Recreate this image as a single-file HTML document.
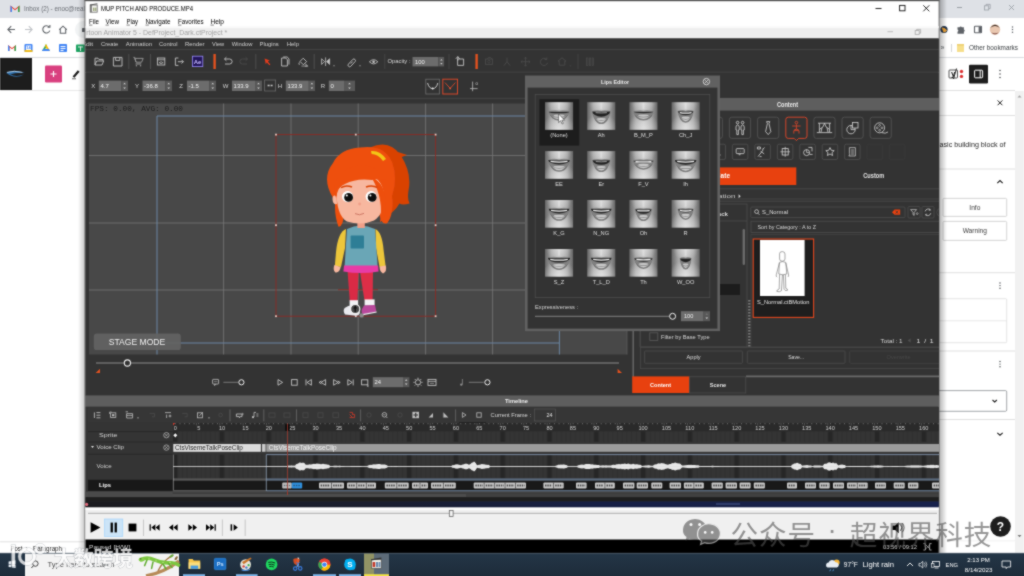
<!DOCTYPE html>
<html lang="en"><head><meta charset="utf-8"><title>MUP PITCH AND PRODUCE.MP4</title>
<style>
html,body{margin:0;padding:0;background:#fff;overflow:hidden}
body{width:1024px;height:576px;font-family:"Liberation Sans","Noto Sans CJK SC",sans-serif}
svg{display:block;position:absolute;left:0;top:0}
text{font-family:"Liberation Sans","Noto Sans CJK SC",sans-serif;white-space:pre}
</style></head><body>
<svg width="1024" height="576" viewBox="0 0 1024 576">
<defs>
<radialGradient id="lipg" cx="50%" cy="45%" r="75%">
<stop offset="0" stop-color="#c9c9c9"/><stop offset="0.55" stop-color="#9a9a9a"/><stop offset="1" stop-color="#4c4c4c"/>
</radialGradient>
<linearGradient id="shL" x1="0" x2="1" y1="0" y2="0"><stop offset="0" stop-color="#000" stop-opacity="0"/><stop offset="1" stop-color="#000" stop-opacity="0.22"/></linearGradient>
<linearGradient id="shR" x1="0" x2="1" y1="0" y2="0"><stop offset="0" stop-color="#000" stop-opacity="0.30"/><stop offset="1" stop-color="#000" stop-opacity="0"/></linearGradient>
<linearGradient id="tbar" x1="0" x2="0" y1="0" y2="1"><stop offset="0" stop-color="#243647"/><stop offset="1" stop-color="#1b2835"/></linearGradient>
<filter id="b1" x="-5%" y="-5%" width="110%" height="110%"><feGaussianBlur stdDeviation="0.45"/></filter>
<filter id="b2" x="-10%" y="-10%" width="120%" height="120%"><feGaussianBlur stdDeviation="0.8"/></filter>
<clipPath id="cpWin"><rect x="85" y="26" width="854" height="481.6"/></clipPath>
<clipPath id="cpLeft"><rect x="0" y="0" width="85" height="553"/></clipPath>
<clipPath id="cpTrack"><rect x="173" y="423" width="766" height="76"/></clipPath>
</defs>
<defs>
<linearGradient id="lipH" x1="0" x2="1" y1="0" y2="0"><stop offset="0" stop-color="#666666"/><stop offset="0.22" stop-color="#a2a2a2"/><stop offset="0.5" stop-color="#c4c4c4"/><stop offset="0.78" stop-color="#a2a2a2"/><stop offset="1" stop-color="#666666"/></linearGradient>
<radialGradient id="lipB" cx="50%" cy="100%" r="60%"><stop offset="0" stop-color="#e6e6e6" stop-opacity="0.85"/><stop offset="1" stop-color="#e6e6e6" stop-opacity="0"/></radialGradient>
<radialGradient id="lipT" cx="50%" cy="0%" r="45%"><stop offset="0" stop-color="#dedede" stop-opacity="0.8"/><stop offset="1" stop-color="#dedede" stop-opacity="0"/></radialGradient>
</defs>
<defs>
<pattern id="trk" patternUnits="userSpaceOnUse" x="172.96" y="0" width="46.8" height="10">
<rect x="0" y="0" width="46.8" height="10" fill="#343434"/>
<rect x="0" y="0" width="4.68" height="10" fill="#262626"/>
<path d="M4.68 0v10M9.36 0v10M14.04 0v10M18.72 0v10M23.4 0v10M28.08 0v10M32.76 0v10M37.44 0v10M42.12 0v10M46.7 0v10" stroke="#2c2c2c" stroke-width="0.7" fill="none"/>
</pattern>
<pattern id="rul" patternUnits="userSpaceOnUse" x="172.96" y="422.8" width="4.68" height="10">
<rect x="2.0" y="0" width="0.8" height="1.4" fill="#777"/>
</pattern>
</defs>
<defs><linearGradient id="navy" gradientUnits="userSpaceOnUse" x1="85" x2="939" y1="0" y2="0"><stop offset="0" stop-color="#1b1b1f"/><stop offset="0.35" stop-color="#1a1e30"/><stop offset="0.6" stop-color="#172046"/><stop offset="1" stop-color="#18224c"/></linearGradient></defs>

<filter id="soft" filterUnits="userSpaceOnUse" x="-8" y="-8" width="1040" height="592" color-interpolation-filters="sRGB"><feConvolveMatrix order="3" kernelMatrix="0.5 1 0.5 1 6 1 0.5 1 0.5" divisor="12" edgeMode="duplicate" preserveAlpha="true"/></filter>
<g filter="url(#soft)">
<rect x="-8" y="-8" width="1040" height="592" fill="#fff"/>
<rect x="-8" y="-8" width="1040" height="592" fill="#ffffff"/>
<rect x="-8" y="-8" width="1040" height="26" fill="#dee1e6"/>
<path d="M10.5 5.5 V12 H12 V8 L15 10.3 L18 8 V12 H19.5 V5.5 L15 9 Z" fill="#ea4335"/>
<path d="M10.5 5.5 V12 H12 V7.2 Z" fill="#4285f4"/>
<path d="M19.5 5.5 V12 H18 V7.2 Z" fill="#34a853"/>
<g clip-path="url(#cpLeft)">
<text x="24" y="11.3" font-size="7.2" fill="#6b6f75" textLength="61" lengthAdjust="spacingAndGlyphs">Inbox (2) - enoc@real</text>
</g>
<path d="M15 29.5 h-7 m3.2 -3.3 l-3.3 3.3 l3.3 3.3" fill="none" stroke="#5f6368" stroke-width="1.1"/>
<path d="M25 29.5 h7 m-3.2 -3.3 l3.3 3.3 l-3.3 3.3" fill="none" stroke="#c0c3c7" stroke-width="1.1"/>
<path d="M49.3 27.2 A3.6 3.6 0 1 0 49.8 30.6" fill="none" stroke="#5f6368" stroke-width="1.1"/>
<path d="M47.6 27.2 h2.3 v-2.3" fill="none" stroke="#5f6368" stroke-width="1.1"/>
<path d="M59.2 29.6 L63 26.2 L66.8 29.6 M60.3 29 V33.2 H65.7 V29" fill="none" stroke="#5f6368" stroke-width="1.1"/>
<rect x="75" y="21" width="40" height="17" fill="#f1f3f4" rx="8.5"/>
<rect x="82" y="28" width="4" height="4" fill="#5f6368" rx="0.6"/>
<path d="M8 45 V51 H9.5 V47.3 L12 49.2 L14.5 47.3 V51 H16 V45 L12 48 Z" fill="#ea4335"/>
<path d="M8 45 V51 H9.5 V46.7 Z" fill="#4285f4"/>
<path d="M16 45 V51 H14.5 V46.7 Z" fill="#34a853"/>
<rect x="24.5" y="44" width="8" height="8" fill="#4285f4" rx="1"/>
<rect x="26" y="45.5" width="5" height="5" fill="#ffffff"/>
<text x="28.5" y="49.48" font-size="4" fill="#4285f4" text-anchor="middle" font-weight="bold">14</text>
<rect x="24.5" y="50" width="8" height="2" fill="#fbbc04" opacity="0.9"/>
<path d="M46 44 L42 51 H44 L47 46 Z" fill="#34a853"/>
<path d="M46 44 L50 51 H48 L45 46 Z" fill="#fbbc04"/>
<path d="M42 51 H50 L49 49 H43 Z" fill="#4285f4"/>
<rect x="59" y="44" width="8" height="8" fill="#4285f4" rx="0.8"/>
<rect x="60.5" y="46" width="5" height="1" fill="#fff"/>
<rect x="60.5" y="48" width="5" height="1" fill="#fff"/>
<rect x="60.5" y="50" width="3" height="1" fill="#fff"/>
<rect x="76" y="44.5" width="9" height="7.5" fill="#1fa463" rx="0.8"/>
<rect x="78" y="46.5" width="5" height="0.9" fill="#fff"/>
<rect x="80" y="46.5" width="0.9" height="4.5" fill="#fff"/>
<line x1="0" y1="57.5" x2="85" y2="57.5" stroke="#dadce0" stroke-width="1"/>
<rect x="0" y="58" width="32" height="32" fill="#1d1d1d"/>
<path d="M6 72.8 Q14 68.8 24.8 73 Q16 72.4 10.4 74.6 Q16.4 77.2 24 74.6 Q15 79.8 6 72.8 Z" fill="#2f6ea8"/>
<path d="M7 72.4 Q14 70.2 22.4 72.4" fill="none" stroke="#cfe6f8" stroke-width="0.8"/>
<line x1="0" y1="90.5" x2="85" y2="90.5" stroke="#e6e6e6" stroke-width="0.9"/>
<rect x="45" y="65.5" width="17" height="17" fill="#d9407f" rx="1.2"/>
<path d="M53.5 71 v6 M50.5 74 h6" fill="none" stroke="#ffffff" stroke-width="1.1"/>
<path d="M72.6 76.4 L77.8 70.2 L79.6 71.8 L74.4 77.8 Z" fill="#1e1e1e"/>
<rect x="72" y="78.2" width="4" height="1.1" fill="#777777"/>
<line x1="0" y1="541.8" x2="85" y2="541.8" stroke="#e0e0e0" stroke-width="1"/>
<text x="10.5" y="550.71" font-size="6.6" fill="#1e1e1e" textLength="12" lengthAdjust="spacingAndGlyphs">Post</text>
<text x="25.5" y="550.71" font-size="6.6" fill="#555">›</text>
<text x="33" y="550.71" font-size="6.6" fill="#1e1e1e" textLength="29" lengthAdjust="spacingAndGlyphs">Paragraph</text>
<line x1="869" y1="7.5" x2="874" y2="7.5" stroke="#9aa0a6" stroke-width="1"/>
<rect x="894.5" y="5.5" width="4" height="4" fill="none" stroke="#9aa0a6" stroke-width="0.8"/>
<path d="M896 5.5 V4.3 H900 V8.3 H898.6" fill="none" stroke="#9aa0a6" stroke-width="0.8"/>
<line x1="957" y1="7.5" x2="962" y2="7.5" stroke="#9aa0a6" stroke-width="1"/>
<rect x="984.5" y="5.8" width="4.2" height="4.2" fill="none" stroke="#9aa0a6" stroke-width="0.8"/>
<path d="M986 5.8 V4.4 H990.2 V8.6 H988.8" fill="none" stroke="#9aa0a6" stroke-width="0.8"/>
<path d="M1009 5 l5 5 m0 -5 l-5 5" fill="none" stroke="#9aa0a6" stroke-width="0.9"/>
<circle cx="944" cy="29.5" r="3.6" fill="#20344f"/>
<path d="M941.5 27.5 Q945 27 947 30.5 Q945.5 32.5 943.5 32.5 Z" fill="#f2a73b"/>
<path d="M957.5 27.2 h2 a1.3 1.3 0 0 1 2.4 0 h2 v2.2 a1.3 1.3 0 0 1 0 2.4 v2 h-6.4 v-2 a1.3 1.3 0 0 0 0 -2.4 Z" fill="#5f6368"/>
<rect x="974.5" y="26.2" width="7" height="6.6" fill="none" stroke="#5f6368" stroke-width="1.1" rx="0.6"/>
<rect x="978.6" y="26.5" width="2.9" height="6" fill="#5f6368"/>
<circle cx="995" cy="29.5" r="5.2" fill="#e9c7b0"/>
<path d="M990.2 28 Q995 21.5 999.8 28 Q997 25.8 995 26 Q993 25.8 990.2 28 Z" fill="#3a2a22"/>
<path d="M991.3 32.6 Q995 36.5 998.7 32.6 Q995 33.8 991.3 32.6 Z" fill="#8a5a50"/>
<circle cx="1012.5" cy="27" r="0.75" fill="#5f6368"/>
<circle cx="1012.5" cy="29.6" r="0.75" fill="#5f6368"/>
<circle cx="1012.5" cy="32.2" r="0.75" fill="#5f6368"/>
<text x="940.5" y="50.24" font-size="7" fill="#5f6368">»</text>
<line x1="951.5" y1="44" x2="951.5" y2="52" stroke="#c8cacd" stroke-width="0.8"/>
<rect x="957" y="44" width="7" height="8" fill="#f6df8c" rx="0.6"/>
<rect x="957" y="44" width="7" height="1.6" fill="#edd072"/>
<text x="969" y="50.05" font-size="6.4" fill="#3c4043" textLength="49" lengthAdjust="spacingAndGlyphs">Other bookmarks</text>
<line x1="939" y1="57.5" x2="1024" y2="57.5" stroke="#dadce0" stroke-width="1"/>
<rect x="949" y="70" width="8.5" height="8" fill="#fff" stroke="#222" stroke-width="0.8" rx="0.8"/>
<text x="953.2" y="76.16" font-size="8" fill="#111" text-anchor="middle" font-weight="bold">y</text>
<line x1="956.5" y1="68.5" x2="953.5" y2="79" stroke="#111" stroke-width="0.9"/>
<circle cx="961.5" cy="71.5" r="1.7" fill="#dc3232"/>
<circle cx="961.5" cy="76.4" r="1.7" fill="#dc3232"/>
<rect x="969" y="64.7" width="19" height="18.7" fill="#1e1e1e" rx="1.2"/>
<rect x="974.6" y="70.2" width="8" height="7.6" fill="none" stroke="#ffffff" stroke-width="1" rx="0.8"/>
<line x1="980.2" y1="70.2" x2="980.2" y2="77.8" stroke="#fff" stroke-width="1"/>
<circle cx="1000" cy="70.5" r="0.75" fill="#3c4043"/>
<circle cx="1000" cy="74" r="0.75" fill="#3c4043"/>
<circle cx="1000" cy="77.5" r="0.75" fill="#3c4043"/>
<line x1="939" y1="90.5" x2="1015" y2="90.5" stroke="#e0e0e0" stroke-width="1"/>
<rect x="1015" y="91" width="9" height="462" fill="#f1f1f1"/>
<path d="M1017.5 97.5 l2 -2.2 l2 2.2 Z" fill="#a3a3a3"/>
<path d="M1017.5 535 l2 2.2 l2 -2.2 Z" fill="#7a7a7a"/>
<path d="M997.6 100.4 l4.8 4.8 m0 -4.8 l-4.8 4.8" fill="none" stroke="#1e1e1e" stroke-width="1"/>
<line x1="939" y1="115.5" x2="1015" y2="115.5" stroke="#e0e0e0" stroke-width="1"/>
<text x="939.5" y="146.64" font-size="6.7" fill="#1e1e1e" textLength="66" lengthAdjust="spacingAndGlyphs">asic building block of</text>
<line x1="939" y1="169" x2="1015" y2="169" stroke="#e0e0e0" stroke-width="1"/>
<path d="M997.3 183.2 l2.7 -2.6 l2.7 2.6" fill="none" stroke="#1e1e1e" stroke-width="1.1"/>
<rect x="943" y="198.4" width="63.7" height="18" fill="#fff" stroke="#c9c9c9" stroke-width="0.8" rx="1"/>
<text x="974.8" y="209.71" font-size="6.6" fill="#3c3c3c" text-anchor="middle">Info</text>
<rect x="943" y="221.4" width="63.7" height="19" fill="#fff" stroke="#c9c9c9" stroke-width="0.8" rx="1"/>
<text x="974.8" y="233.11" font-size="6.6" fill="#3c3c3c" text-anchor="middle">Warning</text>
<line x1="939" y1="272.7" x2="1015" y2="272.7" stroke="#e0e0e0" stroke-width="1"/>
<circle cx="1000" cy="283" r="0.7" fill="#3c4043"/>
<circle cx="1000" cy="285.6" r="0.7" fill="#3c4043"/>
<circle cx="1000" cy="288.2" r="0.7" fill="#3c4043"/>
<rect x="939" y="298.7" width="67.7" height="44" fill="#fff" stroke="#dcdcdc" stroke-width="0.8" rx="1"/>
<line x1="939" y1="320.8" x2="1006.7" y2="320.8" stroke="#e2e2e2" stroke-width="0.8"/>
<line x1="939" y1="351" x2="1015" y2="351" stroke="#e0e0e0" stroke-width="1"/>
<circle cx="1000" cy="361.5" r="0.7" fill="#3c4043"/>
<circle cx="1000" cy="364.1" r="0.7" fill="#3c4043"/>
<circle cx="1000" cy="366.7" r="0.7" fill="#3c4043"/>
<rect x="930" y="390.6" width="76.7" height="20.7" fill="#fff" stroke="#8c8f94" stroke-width="0.8" rx="1.2"/>
<path d="M992.5 400 l2.2 2 l2.2 -2" fill="none" stroke="#1e1e1e" stroke-width="1.1"/>
<line x1="939" y1="419.5" x2="1015" y2="419.5" stroke="#e0e0e0" stroke-width="1"/>
<path d="M997.3 432.8 l2.7 2.4 l2.7 -2.4" fill="none" stroke="#1e1e1e" stroke-width="1.1"/>
<circle cx="1000.5" cy="526.5" r="10.3" fill="#1e1e1e"/>
<text x="1000.5" y="530.54" font-size="12" fill="#fff" text-anchor="middle" font-weight="bold">?</text>
<rect x="78" y="-8" width="7" height="561" fill="url(#shL)"/>
<rect x="939" y="-8" width="8" height="561" fill="url(#shR)"/>
<rect x="85" y="-8" width="854" height="561" fill="#ffffff"/>
<rect x="84.5" y="-8" width="855" height="9.2" fill="#555555"/>
<rect x="84.5" y="-8" width="0.9" height="561" fill="#6a6a6a"/>
<rect x="938.6" y="-8" width="0.9" height="561" fill="#6a6a6a"/>
<rect x="90.2" y="5" width="7" height="7.2" fill="#f3f3ef" stroke="#6a6a6a" stroke-width="0.8"/>
<rect x="90.2" y="5" width="1.6" height="7.2" fill="#707070"/>
<rect x="93" y="7.6" width="1.5" height="3.4" fill="#9aa57a"/>
<rect x="95.1" y="7.6" width="1.3" height="3.4" fill="#9aa57a"/>
<path d="M90 5 L97.4 3.8" fill="none" stroke="#5a5a5a" stroke-width="1.1"/>
<text x="101" y="10.51" font-size="6.6" fill="#000" textLength="92" lengthAdjust="spacingAndGlyphs">MUP PITCH AND PRODUCE.MP4</text>
<line x1="875.5" y1="8.5" x2="881.5" y2="8.5" stroke="#111" stroke-width="0.9"/>
<rect x="899.6" y="5.4" width="5.4" height="5.4" fill="none" stroke="#111" stroke-width="0.9"/>
<path d="M923.3 5.3 l6 6 m0 -6 l-6 6" fill="none" stroke="#111" stroke-width="0.9"/>
<text x="89" y="24.11" font-size="6.6" fill="#000" textLength="10" lengthAdjust="spacingAndGlyphs">File</text>
<line x1="89" y1="25.1" x2="92.4" y2="25.1" stroke="#000" stroke-width="0.5"/>
<text x="105.5" y="24.11" font-size="6.6" fill="#000" textLength="13.5" lengthAdjust="spacingAndGlyphs">View</text>
<line x1="105.5" y1="25.1" x2="108.9" y2="25.1" stroke="#000" stroke-width="0.5"/>
<text x="126.5" y="24.11" font-size="6.6" fill="#000" textLength="11.5" lengthAdjust="spacingAndGlyphs">Play</text>
<line x1="126.5" y1="25.1" x2="129.9" y2="25.1" stroke="#000" stroke-width="0.5"/>
<text x="145.5" y="24.11" font-size="6.6" fill="#000" textLength="25" lengthAdjust="spacingAndGlyphs">Navigate</text>
<line x1="145.5" y1="25.1" x2="148.9" y2="25.1" stroke="#000" stroke-width="0.5"/>
<text x="178" y="24.11" font-size="6.6" fill="#000" textLength="25.5" lengthAdjust="spacingAndGlyphs">Favorites</text>
<line x1="178" y1="25.1" x2="181.4" y2="25.1" stroke="#000" stroke-width="0.5"/>
<text x="210.5" y="24.11" font-size="6.6" fill="#000" textLength="13.5" lengthAdjust="spacingAndGlyphs">Help</text>
<line x1="210.5" y1="25.1" x2="213.9" y2="25.1" stroke="#000" stroke-width="0.5"/>
<rect x="85.5" y="26" width="853.2" height="480" fill="#333333"/>
<rect x="85.5" y="507.4" width="853.2" height="32.2" fill="#f0f0f0"/>
<rect x="85.5" y="507.4" width="853.2" height="2.4" fill="#ffffff"/>
<line x1="88" y1="513.3" x2="937" y2="513.3" stroke="#b9b9b9" stroke-width="1.2"/>
<line x1="88" y1="512.2" x2="937" y2="512.2" stroke="#e4e4e4" stroke-width="0.6"/>
<rect x="449.3" y="510.4" width="3.8" height="6" fill="#f4f4f4" stroke="#555" stroke-width="0.7"/>
<path d="M90.6 522.3 L100.4 527.5 L90.6 532.7 Z" fill="#000"/>
<rect x="104.6" y="519" width="18.2" height="17.5" fill="#cce4f7" stroke="#99d1ff" stroke-width="0.6"/>
<rect x="110.6" y="522.6" width="2.3" height="9.8" fill="#000"/>
<rect x="114.6" y="522.6" width="2.3" height="9.8" fill="#000"/>
<rect x="128.6" y="523.6" width="7.8" height="7.8" fill="#000"/>
<line x1="143.5" y1="519.5" x2="143.5" y2="536" stroke="#bdbdbd" stroke-width="0.8"/>
<rect x="149.6" y="524.3" width="1.2" height="6.4" fill="#000"/>
<path d="M155.4 524.3 v6.4 l-4 -3.2 Z" fill="#000"/>
<path d="M159.6 524.3 v6.4 l-4 -3.2 Z" fill="#000"/>
<path d="M173.2 524.3 v6.4 l-4.2 -3.2 Z" fill="#000"/>
<path d="M177.6 524.3 v6.4 l-4.2 -3.2 Z" fill="#000"/>
<path d="M188.4 524.3 v6.4 l4.2 -3.2 Z" fill="#000"/>
<path d="M192.8 524.3 v6.4 l4.2 -3.2 Z" fill="#000"/>
<path d="M206 524.3 v6.4 l4 -3.2 Z" fill="#000"/>
<path d="M210.2 524.3 v6.4 l4 -3.2 Z" fill="#000"/>
<rect x="214.6" y="524.3" width="1.2" height="6.4" fill="#000"/>
<line x1="222.4" y1="519.5" x2="222.4" y2="536" stroke="#bdbdbd" stroke-width="0.8"/>
<rect x="230.6" y="524.3" width="1.5" height="6.4" fill="#000"/>
<path d="M233.6 524.3 v6.4 l4.2 -3.2 Z" fill="#000"/>
<line x1="245.2" y1="519.5" x2="245.2" y2="536" stroke="#bdbdbd" stroke-width="0.8"/>
<path d="M892.5 525.5 h2.6 l3.6 -3.2 v11 l-3.6 -3.2 h-2.6 Z" fill="#000"/>
<path d="M900.6 524.6 q2.3 3 0 6.2" fill="none" stroke="#000" stroke-width="0.8"/>
<path d="M902.4 523.2 q3.4 4.4 0 9" fill="none" stroke="#222" stroke-width="0.7"/>
<rect x="85.5" y="539.5" width="853.2" height="13.8" fill="#000000"/>
<text x="89" y="548.78" font-size="6.2" fill="#d8d8d8" textLength="41" lengthAdjust="spacingAndGlyphs">Paused [H/W]</text>
<text x="883" y="548.78" font-size="6.2" fill="#d0d0d0" textLength="34" lengthAdjust="spacingAndGlyphs">03:56 / 09:12</text>
<path d="M923.4 543.6 h2 v6.4 h-2 M931.6 543.6 h-2 v6.4 h2" fill="none" stroke="#bdbdbd" stroke-width="0.8"/>
<path d="M925.8 544.8 l2 2 l2 -2 M925.8 548.8 l2 -2 l2 2" fill="none" stroke="#bdbdbd" stroke-width="0.7"/>
<g clip-path="url(#cpWin)">
<rect x="85.5" y="26" width="853.2" height="12.5" fill="#eeeeee"/>
<rect x="85.5" y="26" width="853.2" height="2.2" fill="#fafafa"/>
<text x="86.2" y="34.81" font-size="6.6" fill="#a2a2a2" textLength="141" lengthAdjust="spacingAndGlyphs">rtoon Animator 5 - DefProject_Dark.ctProject *</text>
<line x1="887.5" y1="31.7" x2="893" y2="31.7" stroke="#b5b5b5" stroke-width="0.9"/>
<rect x="915.2" y="30.6" width="4" height="3.8" fill="none" stroke="#a9a9a9" stroke-width="0.8"/>
<path d="M916.6 30.6 V29.4 H920.6 V33.2 H919.2" fill="none" stroke="#a9a9a9" stroke-width="0.8"/>
<rect x="85.5" y="38.5" width="853.2" height="11" fill="#323232"/>
<text x="81.6" y="45.92" font-size="6" fill="#cfcfcf" textLength="11.6" lengthAdjust="spacingAndGlyphs">Edit</text>
<text x="101" y="45.92" font-size="6" fill="#cfcfcf" textLength="17.2" lengthAdjust="spacingAndGlyphs">Create</text>
<text x="125.8" y="45.92" font-size="6" fill="#cfcfcf" textLength="26.3" lengthAdjust="spacingAndGlyphs">Animation</text>
<text x="159" y="45.92" font-size="6" fill="#cfcfcf" textLength="18.6" lengthAdjust="spacingAndGlyphs">Control</text>
<text x="185" y="45.92" font-size="6" fill="#cfcfcf" textLength="19.5" lengthAdjust="spacingAndGlyphs">Render</text>
<text x="212" y="45.92" font-size="6" fill="#cfcfcf" textLength="12.2" lengthAdjust="spacingAndGlyphs">View</text>
<text x="231.7" y="45.92" font-size="6" fill="#cfcfcf" textLength="20.8" lengthAdjust="spacingAndGlyphs">Window</text>
<text x="259.5" y="45.92" font-size="6" fill="#cfcfcf" textLength="19.3" lengthAdjust="spacingAndGlyphs">Plugins</text>
<text x="286.7" y="45.92" font-size="6" fill="#cfcfcf" textLength="12.3" lengthAdjust="spacingAndGlyphs">Help</text>
<line x1="85.5" y1="49.4" x2="939" y2="49.4" stroke="#4a4a4a" stroke-width="0.8"/>
<rect x="85.5" y="50" width="853.2" height="22" fill="#333333"/>
<path d="M95 65 V58.2 h3 l0.9 1.2 h4.2 V61 M95 65 l1.6 -4 h7 l-1.6 4 Z" fill="none" stroke="#c2c2c2" stroke-width="0.9"/>
<path d="M113.4 57.4 h8.6 v8.6 h-8.6 Z M115.6 57.4 v3 h4.2 v-3" fill="none" stroke="#c2c2c2" stroke-width="0.9"/>
<line x1="128.8" y1="54" x2="128.8" y2="69" stroke="#555" stroke-width="0.8"/>
<path d="M134.6 58.4 h8.6 l-1.6 3.8 h-5.4 Z M133.4 57.4 h1.4 l1.2 4.8" fill="none" stroke="#9a9a9a" stroke-width="0.9"/>
<rect x="135.6" y="63.4" width="5.6" height="1.1" fill="#9a9a9a"/>
<circle cx="136.4" cy="65.8" r="0.7" fill="#9a9a9a"/>
<circle cx="140.6" cy="65.8" r="0.7" fill="#9a9a9a"/>
<line x1="150.5" y1="54" x2="150.5" y2="69" stroke="#555" stroke-width="0.8"/>
<rect x="157.4" y="58" width="7.4" height="7" fill="none" stroke="#c2c2c2" stroke-width="0.9"/>
<line x1="157.4" y1="59.8" x2="164.8" y2="59.8" stroke="#c2c2c2" stroke-width="0.8"/>
<path d="M159 62.7 q2.1 -1.9 4.2 0 q-2.1 1.9 -4.2 0 Z" fill="none" stroke="#c2c2c2" stroke-width="0.7"/>
<path d="M178.4 58 H175.4 V65.4 H178.4 M177.8 61.7 h5.6 m-1.8 -1.8 l1.8 1.8 l-1.8 1.8" fill="none" stroke="#c2c2c2" stroke-width="0.9"/>
<rect x="192.4" y="56.2" width="10.4" height="10.4" fill="#23155a" stroke="#9a8cff" stroke-width="0.8"/>
<text x="197.6" y="63.72" font-size="6" fill="#c3b8ff" text-anchor="middle" font-weight="bold">Ae</text>
<rect x="213.4" y="54" width="2.4" height="15" fill="#e2511f"/>
<path d="M224.6 59 h5 a2.5 2.5 0 0 1 0 5 h-4.6 M226.4 57.2 l-1.9 1.8 l1.9 1.8" fill="none" stroke="#c2c2c2" stroke-width="0.9"/>
<path d="M247.4 59 h-5 a2.5 2.5 0 0 0 0 5 h4.6 M245.6 57.2 l1.9 1.8 l-1.9 1.8" fill="none" stroke="#4b4b4b" stroke-width="0.9"/>
<line x1="255.8" y1="54" x2="255.8" y2="69" stroke="#555" stroke-width="0.8"/>
<path d="M264.6 58.6 l5.2 2 l-2 0.9 l2.6 2.9 l-1 0.9 l-2.6 -2.9 l-1 1.9 Z" fill="#e23b1c"/>
<path d="M281.6 58 h4 l1.8 1.8 V66 h-5.8 Z M283.2 57 h4 l1.8 1.8 V64.6" fill="none" stroke="#c2c2c2" stroke-width="0.9"/>
<path d="M300 61.4 l3.2 -3.2 l3.4 3.4 l-3.2 3.2 Z M299.4 62.4 q-0.9 1.6 0 2.4 M305.2 63.6 l2.4 2.6 h-2.8" fill="none" stroke="#c2c2c2" stroke-width="0.9"/>
<rect x="301.4" y="65.6" width="6.4" height="0.9" fill="#9a9a9a"/>
<line x1="314.2" y1="54" x2="314.2" y2="69" stroke="#555" stroke-width="0.8"/>
<path d="M321.6 58.8 v5.6 l3 -2.8 Z" fill="none" stroke="#c2c2c2" stroke-width="0.8"/>
<path d="M329.6 58.8 v5.6 l-3 -2.8 Z" fill="#c2c2c2" stroke="#c2c2c2" stroke-width="0.8"/>
<line x1="325.6" y1="57.4" x2="325.6" y2="66" stroke="#c2c2c2" stroke-width="0.8"/>
<path d="M333 65.4 h2 l-1 1.2 Z" fill="#c2c2c2"/>
<path d="M348.4 64.2 l4.4 -4.8 a1.6 1.6 0 0 1 2.3 2.2 l-4.4 4.8 a1.6 1.6 0 0 1 -2.3 -2.2 Z M350.8 63.6 l1.8 -2" fill="none" stroke="#c2c2c2" stroke-width="0.9"/>
<path d="M359 65.4 h2 l-1 1.2 Z" fill="#c2c2c2"/>
<path d="M369.4 61.8 q4.2 -4.2 8.4 0 q-4.2 4.2 -8.4 0 Z" fill="none" stroke="#c2c2c2" stroke-width="0.9"/>
<circle cx="373.6" cy="61.8" r="1.3" fill="#c2c2c2"/>
<text x="387.5" y="63.46" font-size="5.8" fill="#d6d6d6" textLength="23" lengthAdjust="spacingAndGlyphs">Opacity :</text>
<rect x="412.5" y="57" width="26" height="9.4" fill="#6c6c6c"/>
<text x="415" y="63.56" font-size="5.8" fill="#f2f2f2">100</text>
<rect x="438.7" y="57" width="5.4" height="9.4" fill="#5a5a5a"/>
<path d="M440.2 60.4 l1.2 -1.4 l1.2 1.4 Z M440.2 63 l1.2 1.4 l1.2 -1.4 Z" fill="#d0d0d0"/>
<path d="M457.6 59 h6 v6.4 h-6 Z M455.6 60.6 h-0 M459.6 57 v-0" fill="none" stroke="#c2c2c2" stroke-width="0.9"/>
<path d="M455.8 58.8 l2 -2.2 l2 2.2 M457.8 56.6 v4" fill="none" stroke="#c2c2c2" stroke-width="0.9"/>
<rect x="475.4" y="54" width="2.4" height="15" fill="#e2511f"/>
<line x1="384.8" y1="54" x2="384.8" y2="69" stroke="#4a4a4a" stroke-width="0.8"/>
<line x1="449" y1="54" x2="449" y2="69" stroke="#4a4a4a" stroke-width="0.8"/>
<rect x="485.6" y="59" width="6.8" height="5.4" fill="none" stroke="#4b4b4b" stroke-width="0.9"/>
<path d="M487.4 59 l1 -1.4 h2.4 l1 1.4" fill="none" stroke="#4b4b4b" stroke-width="0.8"/>
<circle cx="489" cy="61.7" r="1.3" fill="none" stroke="#4b4b4b" stroke-width="0.7"/>
<path d="M507 57.6 v4 M507 61.6 l-3 4 M507 61.6 l3 4" fill="none" stroke="#4b4b4b" stroke-width="0.9"/>
<path d="M525.5 57.2 v9 M521 61.7 h9 M524.2 58.6 l1.3 -1.4 l1.3 1.4 M524.2 64.8 l1.3 1.4 l1.3 -1.4 M522.4 60.4 l-1.4 1.3 l1.4 1.3 M528.6 60.4 l1.4 1.3 l-1.4 1.3" fill="none" stroke="#4b4b4b" stroke-width="0.8"/>
<path d="M546.6 59.4 a3.6 3.6 0 1 0 0.9 3.4 M546.8 57.4 v2.2 h-2.2" fill="none" stroke="#4b4b4b" stroke-width="0.9"/>
<path d="M562 57.8 l4 3.4 h-1.2 v4 h-5.6 v-4 h-1.2 Z" fill="none" stroke="#4b4b4b" stroke-width="0.9"/>
<path d="M569.4 65.4 h2 l-1 1.2 Z" fill="#4b4b4b"/>
<line x1="578" y1="54" x2="578" y2="69" stroke="#464646" stroke-width="0.8"/>
<rect x="586.6" y="58" width="1.4" height="7.4" fill="none" stroke="#4b4b4b" stroke-width="0.7"/>
<rect x="589.4" y="58" width="1.4" height="7.4" fill="none" stroke="#4b4b4b" stroke-width="0.7"/>
<rect x="592.2" y="58" width="1.4" height="7.4" fill="none" stroke="#4b4b4b" stroke-width="0.7"/>
<line x1="85.5" y1="72.2" x2="939" y2="72.2" stroke="#4a4a4a" stroke-width="0.8"/>
<rect x="85.5" y="72.8" width="853.2" height="25.4" fill="#333333"/>
<text x="93.2" y="87.92" font-size="6" fill="#d6d6d6" text-anchor="middle">X</text>
<rect x="98.8" y="80.6" width="22.4" height="10.4" fill="#6c6c6c"/>
<text x="100.4" y="87.92" font-size="6" fill="#f4f4f4">4.7</text>
<rect x="121.2" y="80.6" width="6.8" height="10.4" fill="#585858"/>
<path d="M123.3 84.2 l1.3 -1.5 l1.3 1.5 Z M123.3 87.4 l1.3 1.5 l1.3 -1.5 Z" fill="#d8d8d8"/>
<text x="137" y="87.92" font-size="6" fill="#d6d6d6" text-anchor="middle">Y</text>
<rect x="142.5" y="80.6" width="23" height="10.4" fill="#6c6c6c"/>
<text x="144.1" y="87.92" font-size="6" fill="#f4f4f4">-36.8</text>
<rect x="165.5" y="80.6" width="6.5" height="10.4" fill="#585858"/>
<path d="M167.45 84.2 l1.3 -1.5 l1.3 1.5 Z M167.45 87.4 l1.3 1.5 l1.3 -1.5 Z" fill="#d8d8d8"/>
<text x="181" y="87.92" font-size="6" fill="#d6d6d6" text-anchor="middle">Z</text>
<rect x="187" y="80.6" width="22.5" height="10.4" fill="#6c6c6c"/>
<text x="188.6" y="87.92" font-size="6" fill="#f4f4f4">-1.5</text>
<rect x="209.5" y="80.6" width="6.5" height="10.4" fill="#585858"/>
<path d="M211.45 84.2 l1.3 -1.5 l1.3 1.5 Z M211.45 87.4 l1.3 1.5 l1.3 -1.5 Z" fill="#d8d8d8"/>
<text x="225.6" y="87.92" font-size="6" fill="#d6d6d6" text-anchor="middle">W</text>
<rect x="232" y="80.6" width="23" height="10.4" fill="#6c6c6c"/>
<text x="233.6" y="87.92" font-size="6" fill="#f4f4f4">133.9</text>
<rect x="255" y="80.6" width="7" height="10.4" fill="#585858"/>
<path d="M257.2 84.2 l1.3 -1.5 l1.3 1.5 Z M257.2 87.4 l1.3 1.5 l1.3 -1.5 Z" fill="#d8d8d8"/>
<rect x="264.6" y="80" width="11" height="11" fill="none" stroke="#6a6a6a" stroke-width="0.8"/>
<path d="M267.6 85.5 h2 m1 0 h2" fill="none" stroke="#c9c9c9" stroke-width="1.4"/>
<text x="280" y="87.92" font-size="6" fill="#d6d6d6" text-anchor="middle">H</text>
<rect x="285.8" y="80.6" width="23" height="10.4" fill="#6c6c6c"/>
<text x="287.4" y="87.92" font-size="6" fill="#f4f4f4">133.9</text>
<rect x="308.8" y="80.6" width="6.2" height="10.4" fill="#585858"/>
<path d="M310.6 84.2 l1.3 -1.5 l1.3 1.5 Z M310.6 87.4 l1.3 1.5 l1.3 -1.5 Z" fill="#d8d8d8"/>
<text x="323" y="87.92" font-size="6" fill="#d6d6d6" text-anchor="middle">R</text>
<rect x="328.8" y="80.6" width="15.2" height="10.4" fill="#6c6c6c"/>
<text x="330.4" y="87.92" font-size="6" fill="#f4f4f4">0</text>
<rect x="344" y="80.6" width="11" height="10.4" fill="#585858"/>
<path d="M348.2 84.2 l1.3 -1.5 l1.3 1.5 Z M348.2 87.4 l1.3 1.5 l1.3 -1.5 Z" fill="#d8d8d8"/>
<rect x="425.8" y="79.2" width="13.8" height="14.8" fill="none" stroke="#6f6f6f" stroke-width="0.8"/>
<path d="M427.6 83 q1.4 5.6 5.1 5.6 q3.7 0 5.1 -5.6" fill="none" stroke="#d8d8d8" stroke-width="0.9"/>
<circle cx="432.7" cy="88.6" r="1" fill="#e8e8e8"/>
<rect x="442.8" y="79.2" width="14.7" height="14.8" fill="none" stroke="#d8482a" stroke-width="1"/>
<path d="M445 82.6 l5.2 5.8 l5.2 -5.8" fill="none" stroke="#d8482a" stroke-width="0.9"/>
<circle cx="450.2" cy="88.4" r="0.9" fill="#e8583a"/>
<path d="M472.6 81.6 v9.6 M470 88.6 h7.6" fill="none" stroke="#bdbdbd" stroke-width="0.8"/>
<text x="475.6" y="84.81" font-size="4.4" fill="#cfcfcf">0</text>
<line x1="85.5" y1="98.4" x2="939" y2="98.4" stroke="#505050" stroke-width="0.8"/>
<rect x="85.5" y="98.8" width="547" height="297" fill="#333333"/>
<rect x="89" y="103.5" width="538.4" height="251" fill="#484848"/>
<line x1="626.9" y1="103.5" x2="626.9" y2="354.5" stroke="#5a5a5a" stroke-width="0.8"/>
<line x1="223.6" y1="103.5" x2="223.6" y2="354.5" stroke="#767676" stroke-width="0.8"/>
<line x1="291" y1="103.5" x2="291" y2="354.5" stroke="#767676" stroke-width="0.8"/>
<line x1="358.2" y1="103.5" x2="358.2" y2="354.5" stroke="#767676" stroke-width="0.8"/>
<line x1="425.6" y1="103.5" x2="425.6" y2="354.5" stroke="#767676" stroke-width="0.8"/>
<line x1="492.6" y1="103.5" x2="492.6" y2="354.5" stroke="#767676" stroke-width="0.8"/>
<line x1="89" y1="155.5" x2="627" y2="155.5" stroke="#767676" stroke-width="0.8"/>
<line x1="89" y1="223" x2="627" y2="223" stroke="#767676" stroke-width="0.8"/>
<line x1="89" y1="290" x2="627" y2="290" stroke="#767676" stroke-width="0.8"/>
<path d="M157 354.5 V116 H627 M157 343 H559.4 V354.5" fill="none" stroke="#6a84a2" stroke-width="1"/>
<line x1="559.4" y1="116" x2="559.4" y2="343" stroke="#6a84a2" stroke-width="1"/>
<text x="90" y="110.66" font-size="7.7" fill="#1c1c1c" style='font-family:"Liberation Mono", monospace' textLength="93" lengthAdjust="spacingAndGlyphs">FPS: 0.00, AVG: 0.00</text>
<rect x="276" y="134.6" width="159.6" height="181.6" fill="none" stroke="#8c2a24" stroke-width="0.9"/>
<rect x="275.1" y="133.7" width="1.8" height="1.8" fill="#e9c9c0"/>
<rect x="354.9" y="133.7" width="1.8" height="1.8" fill="#e9c9c0"/>
<rect x="434.7" y="133.7" width="1.8" height="1.8" fill="#e9c9c0"/>
<rect x="275.1" y="224.3" width="1.8" height="1.8" fill="#e9c9c0"/>
<rect x="434.7" y="224.3" width="1.8" height="1.8" fill="#e9c9c0"/>
<rect x="275.1" y="315.3" width="1.8" height="1.8" fill="#e9c9c0"/>
<rect x="354.9" y="315.3" width="1.8" height="1.8" fill="#e9c9c0"/>
<rect x="434.7" y="315.3" width="1.8" height="1.8" fill="#e9c9c0"/>
<line x1="338" y1="289.7" x2="378" y2="289.7" stroke="#8c2a24" stroke-width="0.9"/>
<g filter="url(#b1)">
<path d="M370 147.6 Q389 138.6 400.6 155 Q412 173 408.6 190 Q407 199 409.6 203.4 Q402.6 205.4 399.4 203.4 Q394 213.6 384 216 L372 180 Z" fill="#d94306"/>
<path d="M398 152 L407 155 L399 158 Z" fill="#d94306"/>
<path d="M347.6 272 L358.6 272 L357.4 301 L349.8 301 Z" fill="#d92c44"/>
<path d="M360 272 L373 272 L372.6 300 L364.4 300 Z" fill="#dd2f47"/>
<path d="M344.6 308 Q350 304 356 306 L360 312 Q360 316 354 315.6 L345 314.4 Q342.6 311 344.6 308 Z" fill="#e9e9ee"/>
<rect x="349.6" y="300.2" width="8.4" height="6" fill="#f2f2f4"/>
<rect x="364.6" y="299.4" width="10" height="6.2" fill="#f2f2f4"/>
<path d="M364 305.4 L375 305 L376.4 311.6 L363 314.4 Q359.6 312 364 305.4 Z" fill="#b9489c"/>
<line x1="362.8" y1="314.6" x2="376.6" y2="312" stroke="#f2f2f4" stroke-width="1.2"/>
<circle cx="355.2" cy="309" r="4.6" fill="#4a4a4a" stroke="#f4f4f4" stroke-width="1.2"/>
<path d="M355.2 305.6 l2 3 h-1.3 v3.4 h-1.4 v-3.4 h-1.3 Z" fill="#111"/>
<circle cx="361.6" cy="315.4" r="2.2" fill="#8a8a8a"/>
<path d="M346 229 Q338 232 336 252 L334.8 266 L341 267 L345 248 Z" fill="#ecc63a"/>
<path d="M375.4 229 Q382 232 383.6 250 L385.6 266 L379.6 267.2 L376 248 Z" fill="#ecc63a"/>
<path d="M334.4 265 Q332.4 270 335.4 272.4 Q339.8 273 340.6 267 Z" fill="#f7b79f"/>
<path d="M379.6 266.6 Q379.6 272 383 273.4 Q387.2 272 385.8 265.6 Z" fill="#f7b79f"/>
<path d="M347 229 Q360.6 222 375 229 L377.6 266 L344.6 266 Z" fill="#6aa6b6"/>
<rect x="350.6" y="235.6" width="13.4" height="13" fill="#2f7e96" rx="0.8"/>
<path d="M344 265.4 L378 265.4 L378.6 271.4 Q361 274.4 343.4 271.4 Z" fill="#e73aa6"/>
<rect x="357.4" y="221.6" width="7.4" height="6.4" fill="#ef9f88"/>
<path d="M333 198 Q321 178 333 163 Q340 149 360 147.6 Q384 144 392 162 Q398 178 392 196 Q394 214 387.4 223 Q381 226 379 212 L344 214 Q343 227.4 338.4 226.6 Q334.6 216 335 204 Z" fill="#ee4f0c"/>
<path d="M336.6 190 Q338 173.6 360 173.6 Q383 174.6 384 196 Q384.6 214 374 220.4 Q362 226 347 221.6 Q336 215 336.6 190 Z" fill="#f7b79f"/>
<path d="M336.6 196 Q332 194 332.6 200 Q333 205 337 204 Z" fill="#f7b79f"/>
<path d="M334 190 Q336 170 356 166 Q374 162 386 180 Q382 178 372 180 Q356 178 345 184 Q338 186 336 198 Z" fill="#ee4f0c"/>
<path d="M372 178 Q386 182 386 208 Q386 220 380 222 Q384 200 372 178 Z" fill="#ee4f0c"/>
<path d="M371 151 Q380 150 386 159 L383 161 Q378 154 371.6 154 Z" fill="#f2c619"/>
<circle cx="347.6" cy="196.6" r="5.6" fill="#ffffff"/>
<circle cx="371.2" cy="196.6" r="5.6" fill="#ffffff"/>
<circle cx="348.6" cy="197.4" r="4.4" fill="#0d0d0d"/>
<circle cx="372.2" cy="197.4" r="4.4" fill="#0d0d0d"/>
<circle cx="346.8" cy="195.4" r="1" fill="#fff"/>
<circle cx="370.4" cy="195.4" r="1" fill="#fff"/>
<path d="M341 187.6 Q346 184.6 352 187" fill="none" stroke="#d94306" stroke-width="1.6"/>
<path d="M366 187 Q372 184.6 377.6 187.6" fill="none" stroke="#d94306" stroke-width="1.6"/>
<path d="M355 213.6 Q359.4 216 364 213.4" fill="none" stroke="#c76f5d" stroke-width="0.9"/>
<circle cx="359.6" cy="204" r="1.4" fill="#ef9f88"/>
</g>
<rect x="93.8" y="333.5" width="87" height="16.6" fill="#636363" rx="3.2" opacity="0.92"/>
<text x="137" y="344.59" font-size="8.4" fill="#f2f2f2" text-anchor="middle" textLength="56.5" lengthAdjust="spacingAndGlyphs">STAGE MODE</text>
<line x1="96" y1="363" x2="619" y2="363" stroke="#8c8c8c" stroke-width="1.2"/>
<circle cx="127.4" cy="363" r="3.1" fill="#333333" stroke="#f0f0f0" stroke-width="1.1"/>
<path d="M95.6 373 l4.4 -4.2 v4.2 Z" fill="#e2511f"/>
<path d="M622 373 l-4.4 -4.2 v4.2 Z" fill="#e2511f"/>
<rect x="212.6" y="379.4" width="6" height="4.6" fill="none" stroke="#c2c2c2" stroke-width="0.8" rx="0.6"/>
<path d="M214.6 384 v1.6 l1.6 -1.6" fill="none" stroke="#c2c2c2" stroke-width="0.7"/>
<line x1="214" y1="381.6" x2="217.4" y2="381.6" stroke="#c2c2c2" stroke-width="0.5"/>
<line x1="223.4" y1="382.3" x2="238" y2="382.3" stroke="#8c8c8c" stroke-width="0.8"/>
<circle cx="241.4" cy="382.3" r="2.6" fill="#333333" stroke="#f0f0f0" stroke-width="1"/>
<path d="M278 379.6 v5.6 l4.6 -2.8 Z" fill="none" stroke="#c2c2c2" stroke-width="0.9"/>
<rect x="291.6" y="379.6" width="5.6" height="5.6" fill="none" stroke="#c2c2c2" stroke-width="0.9"/>
<path d="M311.4 379.6 v5.6 l-4.4 -2.8 Z M306 379.4 v6" fill="none" stroke="#c2c2c2" stroke-width="0.9"/>
<path d="M325.6 379.6 v5.6 l-4.6 -2.8 Z M321.4 381 l-2.4 1.4 l2.4 1.4" fill="none" stroke="#c2c2c2" stroke-width="0.9"/>
<path d="M333.6 379.6 v5.6 l4.6 -2.8 Z M337.8 381 l2.4 1.4 l-2.4 1.4" fill="none" stroke="#c2c2c2" stroke-width="0.9"/>
<path d="M347.8 379.6 v5.6 l4.4 -2.8 Z M353.2 379.4 v6" fill="none" stroke="#c2c2c2" stroke-width="0.9"/>
<rect x="361.6" y="379.8" width="6.2" height="5" fill="none" stroke="#c2c2c2" stroke-width="0.9"/>
<path d="M366.6 386 l1.8 -1.2 v2.4 Z" fill="#c2c2c2"/>
<rect x="372.8" y="377.2" width="30.2" height="10" fill="#6c6c6c"/>
<text x="374.6" y="384.26" font-size="5.8" fill="#f2f2f2">24</text>
<rect x="403" y="377.2" width="6.4" height="10" fill="#585858"/>
<path d="M404.9 380.8 l1.3 -1.5 l1.3 1.5 Z M404.9 383.6 l1.3 1.5 l1.3 -1.5 Z" fill="#d8d8d8"/>
<circle cx="418" cy="382.3" r="2.6" fill="none" stroke="#c2c2c2" stroke-width="0.9"/>
<line x1="421.3" y1="382.3" x2="422.6" y2="382.3" stroke="#c2c2c2" stroke-width="0.9"/>
<line x1="420.33" y1="384.63" x2="421.25" y2="385.55" stroke="#c2c2c2" stroke-width="0.9"/>
<line x1="418" y1="385.6" x2="418" y2="386.9" stroke="#c2c2c2" stroke-width="0.9"/>
<line x1="415.67" y1="384.63" x2="414.75" y2="385.55" stroke="#c2c2c2" stroke-width="0.9"/>
<line x1="414.7" y1="382.3" x2="413.4" y2="382.3" stroke="#c2c2c2" stroke-width="0.9"/>
<line x1="415.67" y1="379.97" x2="414.75" y2="379.05" stroke="#c2c2c2" stroke-width="0.9"/>
<line x1="418" y1="379" x2="418" y2="377.7" stroke="#c2c2c2" stroke-width="0.9"/>
<line x1="420.33" y1="379.97" x2="421.25" y2="379.05" stroke="#c2c2c2" stroke-width="0.9"/>
<rect x="428" y="379.4" width="8" height="6" fill="none" stroke="#c2c2c2" stroke-width="0.9"/>
<line x1="428" y1="381.4" x2="436" y2="381.4" stroke="#c2c2c2" stroke-width="0.8"/>
<line x1="430" y1="383.4" x2="434" y2="383.4" stroke="#c2c2c2" stroke-width="0.6"/>
<path d="M462.4 379 v5.4" fill="none" stroke="#8c8c8c" stroke-width="0.8"/>
<circle cx="461.3" cy="384.6" r="1.2" fill="#8c8c8c"/>
<line x1="468.8" y1="382.3" x2="483.6" y2="382.3" stroke="#8c8c8c" stroke-width="0.8"/>
<circle cx="487.4" cy="382.3" r="2.6" fill="#333333" stroke="#f0f0f0" stroke-width="1"/>
<rect x="628" y="98.8" width="311" height="297" fill="#333333"/>
<line x1="633.2" y1="110" x2="633.2" y2="377" stroke="#6a6a6a" stroke-width="1.4"/>
<rect x="633" y="98" width="306" height="12.6" fill="#5e5e5e"/>
<text x="787.5" y="106.71" font-size="6.6" fill="#ececec" text-anchor="middle" font-weight="bold" textLength="21" lengthAdjust="spacingAndGlyphs">Content</text>
<rect x="701.2" y="117.2" width="21.2" height="21.2" fill="none" stroke="#525252" stroke-width="0.9" rx="2.4"/>
<rect x="729.4" y="117.2" width="21.2" height="21.2" fill="none" stroke="#525252" stroke-width="0.9" rx="2.4"/>
<rect x="757.6" y="117.2" width="21.2" height="21.2" fill="none" stroke="#525252" stroke-width="0.9" rx="2.4"/>
<rect x="813.9" y="117.2" width="21.2" height="21.2" fill="none" stroke="#525252" stroke-width="0.9" rx="2.4"/>
<rect x="842" y="117.2" width="21.2" height="21.2" fill="none" stroke="#525252" stroke-width="0.9" rx="2.4"/>
<rect x="870.1" y="117.2" width="21.2" height="21.2" fill="none" stroke="#525252" stroke-width="0.9" rx="2.4"/>
<path d="M788.2 117.2 h16.4 a2.4 2.4 0 0 1 2.4 2.4 v16.4 a2.4 2.4 0 0 1 -2.4 2.4 h-6 l-2.2 2.2 l-2.2 -2.2 h-6 a2.4 2.4 0 0 1 -2.4 -2.4 v-16.4 a2.4 2.4 0 0 1 2.4 -2.4 Z" fill="none" stroke="#d2452a" stroke-width="1"/>
<circle cx="737.6" cy="122.6" r="1.3" fill="none" stroke="#d4d4d4" stroke-width="0.8"/>
<path d="M737.6 125 q1.6 0 1.6 2 v3 h-0.8 v4.6 h-1.6 v-4.6 h-0.8 v-3 q0 -2 1.6 -2 Z" fill="none" stroke="#d4d4d4" stroke-width="0.8"/>
<circle cx="742.6" cy="122.6" r="1.3" fill="none" stroke="#d4d4d4" stroke-width="0.8"/>
<path d="M742.6 125 q1.6 0 1.6 2 v3 h-0.8 v4.6 h-1.6 v-4.6 h-0.8 v-3 q0 -2 1.6 -2 Z" fill="none" stroke="#d4d4d4" stroke-width="0.8"/>
<path d="M766.6 121.6 h3.2 l-0.8 2 l1.8 8 l-2.6 3 l-2.6 -3 l1.8 -8 Z" fill="none" stroke="#d4d4d4" stroke-width="0.8"/>
<circle cx="796.4" cy="122.6" r="1.3" fill="none" stroke="#d2452a" stroke-width="0.9"/>
<path d="M792.2 126 h8.4 M796.4 124.4 v5 M793.8 133.6 v-3 h5.2 v3 M794 130 q2.4 -1.6 4.8 0" fill="none" stroke="#d2452a" stroke-width="0.9"/>
<path d="M818 123.2 h13 M819.4 123.2 v9 M829.6 123.2 v9 M816.8 132.6 h15.4 M824.5 123.2 q-0.6 4.4 -5 6.2 M824.5 123.2 q0.6 4.4 5 6.2 M822 127.6 l-1 4.6 M827 127.6 l1 4.6" fill="none" stroke="#d4d4d4" stroke-width="0.8"/>
<circle cx="851" cy="129.6" r="4.2" fill="none" stroke="#d4d4d4" stroke-width="0.8"/>
<path d="M851 129.6 v-4.2 M851 129.6 h4.2" fill="none" stroke="#d4d4d4" stroke-width="0.8"/>
<rect x="852.4" y="122.4" width="5.6" height="5.6" fill="#333333" stroke="#d4d4d4" stroke-width="0.8"/>
<circle cx="879.6" cy="127.8" r="5" fill="none" stroke="#d4d4d4" stroke-width="0.8"/>
<circle cx="879.6" cy="125.4" r="0.9" fill="none" stroke="#d4d4d4" stroke-width="0.6"/>
<circle cx="879.6" cy="130.2" r="0.9" fill="none" stroke="#d4d4d4" stroke-width="0.6"/>
<circle cx="877.2" cy="127.8" r="0.9" fill="none" stroke="#d4d4d4" stroke-width="0.6"/>
<circle cx="882" cy="127.8" r="0.9" fill="none" stroke="#d4d4d4" stroke-width="0.6"/>
<path d="M881.6 132.6 q4 1.4 6.4 -0.6" fill="none" stroke="#d4d4d4" stroke-width="0.8"/>
<rect x="710" y="144.2" width="15.5" height="15.3" fill="none" stroke="#525252" stroke-width="0.8" rx="1.6"/>
<rect x="732.4" y="144.2" width="15.5" height="15.3" fill="none" stroke="#525252" stroke-width="0.8" rx="1.6"/>
<rect x="754.9" y="144.2" width="15.5" height="15.3" fill="none" stroke="#525252" stroke-width="0.8" rx="1.6"/>
<rect x="777.4" y="144.2" width="15.5" height="15.3" fill="none" stroke="#525252" stroke-width="0.8" rx="1.6"/>
<rect x="799.8" y="144.2" width="15.5" height="15.3" fill="none" stroke="#525252" stroke-width="0.8" rx="1.6"/>
<rect x="822.2" y="144.2" width="15.5" height="15.3" fill="none" stroke="#525252" stroke-width="0.8" rx="1.6"/>
<rect x="844.6" y="144.2" width="15.5" height="15.3" fill="none" stroke="#525252" stroke-width="0.8" rx="1.6"/>
<rect x="867" y="144.2" width="15.5" height="15.3" fill="none" stroke="#3a3a3a" stroke-width="0.8" rx="1.6"/>
<rect x="889.4" y="144.2" width="15.5" height="15.3" fill="none" stroke="#3a3a3a" stroke-width="0.8" rx="1.6"/>
<path d="M714 147.4 h5 v5 h-5 Z M714.6 155 h6" fill="none" stroke="#d4d4d4" stroke-width="0.8"/>
<rect x="736.2" y="148.6" width="8" height="5" fill="none" stroke="#d4d4d4" stroke-width="0.8" rx="0.8"/>
<path d="M738.6 151.2 h0.6 m1 0 h0.6 m1 0 h0.6 M738.6 153.6 l1 1.6 l1 -1.6" fill="none" stroke="#d4d4d4" stroke-width="0.7"/>
<path d="M758 156.6 l5.4 -7 M760.6 151.4 l3.6 2.4 M762 149.6 l2.6 -2 M759.6 156.6 h2 M757.4 147 h3 v2 h-3 Z" fill="none" stroke="#d4d4d4" stroke-width="0.8"/>
<rect x="782.2" y="148.6" width="6" height="6.4" fill="none" stroke="#d4d4d4" stroke-width="0.8"/>
<path d="M785.2 146.8 v10 M780.4 151.8 h9.6" fill="none" stroke="#d4d4d4" stroke-width="0.7"/>
<circle cx="806.6" cy="152.6" r="3" fill="none" stroke="#d4d4d4" stroke-width="0.8"/>
<path d="M806.6 152.6 v-3 M806.6 152.6 h3" fill="none" stroke="#d4d4d4" stroke-width="0.7"/>
<path d="M808.4 147.4 h3.6 v4 M809.6 154.4 h3" fill="none" stroke="#d4d4d4" stroke-width="0.8"/>
<path d="M830 147.6 l1.3 2.7 l2.9 0.3 l-2.2 2 l0.6 2.9 l-2.6 -1.5 l-2.6 1.5 l0.6 -2.9 l-2.2 -2 l2.9 -0.3 Z" fill="none" stroke="#d4d4d4" stroke-width="0.8"/>
<path d="M849.4 147.6 h6 v8.4 h-6.6 q1.4 -1 0.6 -2.4 Z M850.8 150 h3.4 M850.8 152 h3.4 M850.8 154 h3.4" fill="none" stroke="#d4d4d4" stroke-width="0.7"/>
<rect x="634" y="167.4" width="162.3" height="17.6" fill="#e8410f"/>
<text x="716" y="178.25" font-size="6.4" fill="#ffffff" text-anchor="middle" font-weight="bold" textLength="28" lengthAdjust="spacingAndGlyphs">Template</text>
<text x="873.8" y="178.25" font-size="6.4" fill="#e4e4e4" text-anchor="middle" font-weight="bold" textLength="21" lengthAdjust="spacingAndGlyphs">Custom</text>
<line x1="634" y1="188.8" x2="939" y2="188.8" stroke="#4d4d4d" stroke-width="0.8"/>
<text x="699.6" y="198.18" font-size="6.2" fill="#c9c9c9" textLength="36" lengthAdjust="spacingAndGlyphs">Animation</text>
<path d="M738.6 194.2 l2 2 l-2 2 Z" fill="#d4d4d4"/>
<line x1="634" y1="201.2" x2="939" y2="201.2" stroke="#4d4d4d" stroke-width="0.8"/>
<rect x="640" y="204" width="107" height="143" fill="none" stroke="#4d4d4d" stroke-width="0.8"/>
<text x="713.6" y="215.58" font-size="6.2" fill="#d8d8d8" font-weight="bold">Pack</text>
<line x1="640" y1="221" x2="747" y2="221" stroke="#4d4d4d" stroke-width="0.8"/>
<rect x="742.6" y="229" width="2.4" height="36" fill="#6a6a6a" rx="1.2"/>
<rect x="646" y="284" width="94" height="11" fill="#1c1c1c"/>
<rect x="750.8" y="207" width="154.2" height="10.6" fill="none" stroke="#4e4e4e" stroke-width="0.8" rx="1"/>
<circle cx="756.6" cy="211.6" r="1.9" fill="none" stroke="#cfcfcf" stroke-width="0.8"/>
<line x1="758" y1="213.2" x2="759.4" y2="214.8" stroke="#cfcfcf" stroke-width="0.8"/>
<text x="762" y="214.32" font-size="6" fill="#dedede" textLength="26" lengthAdjust="spacingAndGlyphs">S_Normal</text>
<path d="M892 212.2 l2.6 -2.6 h5.6 v5.2 h-5.6 Z" fill="#e8410f"/>
<path d="M895.6 210.8 l2.6 2.8 m0 -2.8 l-2.6 2.8" fill="none" stroke="#333333" stroke-width="0.7"/>
<rect x="908" y="206.6" width="12" height="11.4" fill="none" stroke="#4e4e4e" stroke-width="0.8" rx="1"/>
<path d="M910.6 209.6 h6 l-2.4 2.8 v3 l-1.2 -0.8 v-2.2 Z" fill="none" stroke="#cfcfcf" stroke-width="0.7"/>
<circle cx="917.2" cy="213.6" r="0.9" fill="none" stroke="#cfcfcf" stroke-width="0.6"/>
<rect x="922" y="206.6" width="12" height="11.4" fill="none" stroke="#4e4e4e" stroke-width="0.8" rx="1"/>
<path d="M925.2 211.4 a3 3 0 0 1 5 -1.6 M930.8 213.2 a3 3 0 0 1 -5 1.6" fill="none" stroke="#cfcfcf" stroke-width="0.8"/>
<path d="M929.6 208.6 l1 1.6 l-1.8 0.2 M926.4 216 l-1 -1.6 l1.8 -0.2" fill="none" stroke="#cfcfcf" stroke-width="0.6"/>
<circle cx="940.8" cy="212.4" r="4" fill="none" stroke="#4e4e4e" stroke-width="0.8"/>
<rect x="751" y="221.2" width="190" height="11.2" fill="none" stroke="#4d4d4d" stroke-width="0.8"/>
<text x="757.4" y="228.92" font-size="6" fill="#d4d4d4" textLength="58.6" lengthAdjust="spacingAndGlyphs">Sort by Category : A to Z</text>
<rect x="751" y="234.6" width="190" height="112.6" fill="none" stroke="#434343" stroke-width="0.8"/>
<rect x="753.2" y="239" width="60.4" height="78.4" fill="#1e1e1e" stroke="#e2471d" stroke-width="1.1"/>
<rect x="760" y="240" width="44.6" height="56" fill="#ffffff"/>
<path d="M779.6 253.6 q0 -2 2.6 -2 q2.8 0 2.8 2.4 v5 q0 2.2 -2.8 2.2 q-2.6 0 -2.6 -2.2 Z" fill="none" stroke="#6d6d6d" stroke-width="0.6"/>
<path d="M779.4 262.4 q3 -1.6 6.4 0 l1 11.6 q-4 1.6 -8 0 Z" fill="none" stroke="#6d6d6d" stroke-width="0.6"/>
<path d="M779.4 263 l-3 11.4 q-0.8 2.4 0.8 2.6 M785.8 263 l2.6 11 q0.8 2.6 -0.6 3" fill="none" stroke="#6d6d6d" stroke-width="0.6"/>
<path d="M779.6 274.4 l-0.4 14.6 q-2.8 1 -2.4 2.4 q2.6 1 4.6 -0.6 l1 -16 M783.4 274.8 l0.6 14.4 q0.6 1.8 3.4 1.2 q0.8 -1.6 -1.6 -2 l-0.4 -13.8" fill="none" stroke="#6d6d6d" stroke-width="0.6"/>
<text x="757" y="304.42" font-size="5.7" fill="#e0e0e0" textLength="52.4" lengthAdjust="spacingAndGlyphs">S_Normal.ctBMotion</text>
<rect x="748.2" y="300" width="2.2" height="1.6" fill="#7a7a7a"/>
<rect x="748.2" y="303" width="2.2" height="1.6" fill="#7a7a7a"/>
<rect x="748.2" y="306" width="2.2" height="1.6" fill="#7a7a7a"/>
<rect x="748.2" y="309" width="2.2" height="1.6" fill="#7a7a7a"/>
<rect x="748.2" y="312" width="2.2" height="1.6" fill="#7a7a7a"/>
<rect x="748.2" y="315" width="2.2" height="1.6" fill="#7a7a7a"/>
<rect x="748.2" y="318" width="2.2" height="1.6" fill="#7a7a7a"/>
<rect x="748.2" y="321" width="2.2" height="1.6" fill="#7a7a7a"/>
<rect x="748.2" y="324" width="2.2" height="1.6" fill="#7a7a7a"/>
<rect x="748.2" y="327" width="2.2" height="1.6" fill="#7a7a7a"/>
<rect x="748.2" y="330" width="2.2" height="1.6" fill="#7a7a7a"/>
<rect x="748.2" y="333" width="2.2" height="1.6" fill="#7a7a7a"/>
<rect x="748.2" y="336" width="2.2" height="1.6" fill="#7a7a7a"/>
<rect x="748.2" y="339" width="2.2" height="1.6" fill="#7a7a7a"/>
<rect x="748.2" y="342" width="2.2" height="1.6" fill="#7a7a7a"/>
<rect x="748.2" y="345" width="2.2" height="1.6" fill="#7a7a7a"/>
<text x="880.6" y="342.52" font-size="6" fill="#d4d4d4" textLength="22" lengthAdjust="spacingAndGlyphs">Total : 1</text>
<path d="M910.6 338.6 v4 l-3 -2 Z" fill="#4f4f4f"/>
<text x="916.6" y="342.52" font-size="6" fill="#e0e0e0" textLength="17" lengthAdjust="spacingAndGlyphs">1  /  1</text>
<path d="M940 338.6 v4 l3 -2 Z" fill="#4f4f4f"/>
<rect x="649.8" y="332.8" width="8" height="7.6" fill="none" stroke="#5a5a5a" stroke-width="0.8"/>
<text x="661" y="338.86" font-size="5.8" fill="#d4d4d4" textLength="48.6" lengthAdjust="spacingAndGlyphs">Filter by Base Type</text>
<line x1="640" y1="347.2" x2="941" y2="347.2" stroke="#4d4d4d" stroke-width="0.8"/>
<rect x="644.6" y="351" width="97.8" height="12.3" fill="none" stroke="#4e4e4e" stroke-width="0.8" rx="0.8"/>
<text x="693.6" y="359.26" font-size="5.8" fill="#dcdcdc" text-anchor="middle" textLength="14" lengthAdjust="spacingAndGlyphs">Apply</text>
<rect x="747.3" y="351" width="97.7" height="12.3" fill="none" stroke="#4e4e4e" stroke-width="0.8" rx="0.8"/>
<text x="796.2" y="359.26" font-size="5.8" fill="#dcdcdc" text-anchor="middle" textLength="16" lengthAdjust="spacingAndGlyphs">Save...</text>
<rect x="849.7" y="351" width="97" height="12.3" fill="none" stroke="#444444" stroke-width="0.8" rx="0.8"/>
<text x="898.6" y="359.26" font-size="5.8" fill="#474747" text-anchor="middle" textLength="24" lengthAdjust="spacingAndGlyphs">Overwrite</text>
<rect x="640.4" y="199" width="305" height="169.6" fill="none" stroke="#484848" stroke-width="0.8"/>
<line x1="746" y1="376.4" x2="941" y2="376.4" stroke="#6a6a6a" stroke-width="1.6"/>
<rect x="632.2" y="376.4" width="57.2" height="16.6" fill="#e8410f"/>
<text x="660.6" y="386.92" font-size="6" fill="#ffffff" text-anchor="middle" font-weight="bold" textLength="21" lengthAdjust="spacingAndGlyphs">Content</text>
<rect x="689.4" y="376.8" width="56.4" height="16.2" fill="none" stroke="#4d4d4d" stroke-width="0.8"/>
<text x="718" y="386.92" font-size="6" fill="#e4e4e4" text-anchor="middle" font-weight="bold" textLength="16.4" lengthAdjust="spacingAndGlyphs">Scene</text>
<rect x="525" y="75.5" width="195" height="255.6" fill="#616161"/>
<rect x="527.6" y="87.6" width="189.8" height="241" fill="#333333"/>
<text x="615" y="83.68" font-size="6.2" fill="#ececec" text-anchor="middle" font-weight="bold" textLength="28" lengthAdjust="spacingAndGlyphs">Lips Editor</text>
<circle cx="706.4" cy="81.6" r="3.2" fill="none" stroke="#e4e4e4" stroke-width="0.8"/>
<path d="M704.8 80 l3.2 3.2 m0 -3.2 l-3.2 3.2" fill="none" stroke="#e4e4e4" stroke-width="0.7"/>
<rect x="535.2" y="94.4" width="174.6" height="203.2" fill="none" stroke="#4c4c4c" stroke-width="0.8"/>
<rect x="539.4" y="99.2" width="39.8" height="46.4" fill="#1d1d1d"/>
<g filter="url(#b1)">
<rect x="545" y="102.2" width="28.1" height="27.6" fill="url(#lipH)"/>
<rect x="545" y="102.2" width="28.1" height="27.6" fill="url(#lipB)"/>
<rect x="545" y="102.2" width="28.1" height="27.6" fill="url(#lipT)"/>
<line x1="559.05" y1="103.2" x2="559.05" y2="108.8" stroke="#e4e4e4" stroke-width="1.8" opacity="0.6"/>
<path d="M550.08 112.33 A8.97 7.64 0 0 0 568.02 112.33" fill="none" stroke="#585858" stroke-width="1.5" opacity="0.7"/>
<path d="M548.11 111.73 A10.94 5.94 0 0 0 569.99 111.73 Z" fill="#818181"/>
<ellipse cx="559.05" cy="115.77" rx="5.47" ry="1.15" fill="#d6d6d6" opacity="0.85"/>
<path d="M547.31 111.73 Q554.13 109.45 559.05 110.74 Q563.97 109.45 570.79 111.73 L569.99 112.03 Q559.05 113.27 548.11 112.03 Z" fill="#8c8c8c"/>
<path d="M548.65 111.73 A10.4 1.64 0 0 0 569.45 111.73 Q559.05 112.03 548.65 111.73 Z" fill="#242424"/>
</g>
<text x="559.05" y="137.22" font-size="5.7" fill="#dedede" text-anchor="middle">(None)</text>
<g filter="url(#b1)">
<rect x="587.2" y="102.2" width="28.1" height="27.6" fill="url(#lipH)"/>
<rect x="587.2" y="102.2" width="28.1" height="27.6" fill="url(#lipB)"/>
<rect x="587.2" y="102.2" width="28.1" height="27.6" fill="url(#lipT)"/>
<line x1="601.25" y1="103.2" x2="601.25" y2="108.8" stroke="#e4e4e4" stroke-width="1.8" opacity="0.6"/>
<path d="M593.58 112.06 A7.67 11.18 0 0 0 608.92 112.06" fill="none" stroke="#585858" stroke-width="1.5" opacity="0.7"/>
<path d="M591.9 111.46 A9.35 9.48 0 0 0 610.6 111.46 Z" fill="#818181"/>
<ellipse cx="601.25" cy="119.04" rx="4.67" ry="1.15" fill="#d6d6d6" opacity="0.85"/>
<path d="M591.1 111.46 Q597.04 109.3 601.25 110.68 Q605.46 109.3 611.4 111.46 L610.6 111.76 Q601.25 113.54 591.9 111.76 Z" fill="#8c8c8c"/>
<path d="M592.37 111.46 A8.88 5.18 0 0 0 610.13 111.46 Q601.25 112.06 592.37 111.46 Z" fill="#242424"/>
<path d="M595.64 112.7 Q601.25 113.2 606.86 112.7" fill="none" stroke="#a8a8a8" stroke-width="0.9"/>
</g>
<text x="601.25" y="137.22" font-size="5.7" fill="#dedede" text-anchor="middle">Ah</text>
<g filter="url(#b1)">
<rect x="629.4" y="102.2" width="28.1" height="27.6" fill="url(#lipH)"/>
<rect x="629.4" y="102.2" width="28.1" height="27.6" fill="url(#lipB)"/>
<rect x="629.4" y="102.2" width="28.1" height="27.6" fill="url(#lipT)"/>
<line x1="643.45" y1="103.2" x2="643.45" y2="108.8" stroke="#e4e4e4" stroke-width="1.8" opacity="0.6"/>
<path d="M634.85 112.46 A8.6 7.27 0 0 0 652.05 112.46" fill="none" stroke="#585858" stroke-width="1.5" opacity="0.7"/>
<path d="M632.96 111.86 A10.49 5.57 0 0 0 653.94 111.86 Z" fill="#818181"/>
<ellipse cx="643.45" cy="115.53" rx="5.24" ry="1.15" fill="#d6d6d6" opacity="0.85"/>
<path d="M632.16 111.86 Q638.73 109.52 643.45 110.77 Q648.17 109.52 654.74 111.86 L653.94 112.16 Q643.45 113.13 632.96 112.16 Z" fill="#8c8c8c"/>
<path d="M633.49 111.86 A9.96 1.27 0 0 0 653.41 111.86 Q643.45 112.02 633.49 111.86 Z" fill="#242424"/>
</g>
<text x="643.45" y="137.22" font-size="5.7" fill="#dedede" text-anchor="middle">B_M_P</text>
<g filter="url(#b1)">
<rect x="671.6" y="102.2" width="28.1" height="27.6" fill="url(#lipH)"/>
<rect x="671.6" y="102.2" width="28.1" height="27.6" fill="url(#lipB)"/>
<rect x="671.6" y="102.2" width="28.1" height="27.6" fill="url(#lipT)"/>
<line x1="685.65" y1="103.2" x2="685.65" y2="108.8" stroke="#e4e4e4" stroke-width="1.8" opacity="0.6"/>
<path d="M679.11 111.97 A6.54 9.96 0 0 0 692.19 111.97" fill="none" stroke="#585858" stroke-width="1.5" opacity="0.7"/>
<path d="M677.67 111.37 A7.98 8.26 0 0 0 693.63 111.37 Z" fill="#818181"/>
<ellipse cx="685.65" cy="117.73" rx="3.99" ry="1.15" fill="#d6d6d6" opacity="0.85"/>
<path d="M676.87 111.37 Q682.06 109.25 685.65 110.66 Q689.24 109.25 694.43 111.37 L693.63 111.67 Q685.65 113.63 677.67 111.67 Z" fill="#8c8c8c"/>
<path d="M678.07 111.37 A7.58 3.96 0 0 0 693.23 111.37 Q685.65 112.07 678.07 111.37 Z" fill="#242424"/>
<path d="M679.74 112.66 Q685.65 113.7 691.56 112.66" fill="none" stroke="#f2f2f2" stroke-width="1.3"/>
</g>
<text x="685.65" y="137.22" font-size="5.7" fill="#dedede" text-anchor="middle">Ch_J</text>
<g filter="url(#b1)">
<rect x="545" y="151.1" width="28.1" height="27.6" fill="url(#lipH)"/>
<rect x="545" y="151.1" width="28.1" height="27.6" fill="url(#lipB)"/>
<rect x="545" y="151.1" width="28.1" height="27.6" fill="url(#lipT)"/>
<line x1="559.05" y1="152.1" x2="559.05" y2="157.7" stroke="#e4e4e4" stroke-width="1.8" opacity="0.6"/>
<path d="M549.7 160.51 A9.35 10.48 0 0 0 568.4 160.51" fill="none" stroke="#585858" stroke-width="1.5" opacity="0.7"/>
<path d="M547.65 159.91 A11.4 8.78 0 0 0 570.45 159.91 Z" fill="#818181"/>
<ellipse cx="559.05" cy="166.79" rx="5.7" ry="1.15" fill="#d6d6d6" opacity="0.85"/>
<path d="M546.85 159.91 Q553.92 157.95 559.05 159.48 Q564.18 157.95 571.25 159.91 L570.45 160.21 Q559.05 162.89 547.65 160.21 Z" fill="#8c8c8c"/>
<path d="M548.22 159.91 A10.83 4.48 0 0 0 569.88 159.91 Q559.05 161.01 548.22 159.91 Z" fill="#242424"/>
<path d="M550.61 161.43 Q559.05 163 567.49 161.43" fill="none" stroke="#f2f2f2" stroke-width="1.3"/>
</g>
<text x="559.05" y="186.12" font-size="5.7" fill="#dedede" text-anchor="middle">EE</text>
<g filter="url(#b1)">
<rect x="587.2" y="151.1" width="28.1" height="27.6" fill="url(#lipH)"/>
<rect x="587.2" y="151.1" width="28.1" height="27.6" fill="url(#lipB)"/>
<rect x="587.2" y="151.1" width="28.1" height="27.6" fill="url(#lipT)"/>
<line x1="601.25" y1="152.1" x2="601.25" y2="157.7" stroke="#e4e4e4" stroke-width="1.8" opacity="0.6"/>
<path d="M593.77 160.78 A7.48 10.54 0 0 0 608.73 160.78" fill="none" stroke="#585858" stroke-width="1.5" opacity="0.7"/>
<path d="M592.13 160.18 A9.12 8.84 0 0 0 610.37 160.18 Z" fill="#818181"/>
<ellipse cx="601.25" cy="167.12" rx="4.56" ry="1.15" fill="#d6d6d6" opacity="0.85"/>
<path d="M591.33 160.18 Q597.15 158.1 601.25 159.54 Q605.35 158.1 611.17 160.18 L610.37 160.48 Q601.25 162.62 592.13 160.48 Z" fill="#8c8c8c"/>
<path d="M592.59 160.18 A8.66 4.54 0 0 0 609.91 160.18 Q601.25 160.98 592.59 160.18 Z" fill="#242424"/>
<path d="M595.78 161.5 Q601.25 162.2 606.72 161.5" fill="none" stroke="#a8a8a8" stroke-width="0.9"/>
</g>
<text x="601.25" y="186.12" font-size="5.7" fill="#dedede" text-anchor="middle">Er</text>
<g filter="url(#b1)">
<rect x="629.4" y="151.1" width="28.1" height="27.6" fill="url(#lipH)"/>
<rect x="629.4" y="151.1" width="28.1" height="27.6" fill="url(#lipB)"/>
<rect x="629.4" y="151.1" width="28.1" height="27.6" fill="url(#lipT)"/>
<line x1="643.45" y1="152.1" x2="643.45" y2="157.7" stroke="#e4e4e4" stroke-width="1.8" opacity="0.6"/>
<path d="M634.66 161.32 A8.79 7.76 0 0 0 652.24 161.32" fill="none" stroke="#585858" stroke-width="1.5" opacity="0.7"/>
<path d="M632.73 160.72 A10.72 6.06 0 0 0 654.17 160.72 Z" fill="#818181"/>
<ellipse cx="643.45" cy="164.88" rx="5.36" ry="1.15" fill="#d6d6d6" opacity="0.85"/>
<path d="M631.93 160.72 Q638.63 158.4 643.45 159.66 Q648.27 158.4 654.97 160.72 L654.17 161.02 Q643.45 162.08 632.73 161.02 Z" fill="#8c8c8c"/>
<path d="M633.27 160.72 A10.18 1.76 0 0 0 653.63 160.72 Q643.45 160.92 633.27 160.72 Z" fill="#242424"/>
<path d="M635.52 161.73 Q643.45 162.1 651.38 161.73" fill="none" stroke="#f2f2f2" stroke-width="1.3"/>
</g>
<text x="643.45" y="186.12" font-size="5.7" fill="#dedede" text-anchor="middle">F_V</text>
<g filter="url(#b1)">
<rect x="671.6" y="151.1" width="28.1" height="27.6" fill="url(#lipH)"/>
<rect x="671.6" y="151.1" width="28.1" height="27.6" fill="url(#lipB)"/>
<rect x="671.6" y="151.1" width="28.1" height="27.6" fill="url(#lipT)"/>
<line x1="685.65" y1="152.1" x2="685.65" y2="157.7" stroke="#e4e4e4" stroke-width="1.8" opacity="0.6"/>
<path d="M676.3 160.51 A9.35 10.88 0 0 0 695 160.51" fill="none" stroke="#585858" stroke-width="1.5" opacity="0.7"/>
<path d="M674.25 159.91 A11.4 9.18 0 0 0 697.05 159.91 Z" fill="#818181"/>
<ellipse cx="685.65" cy="167.19" rx="5.7" ry="1.15" fill="#d6d6d6" opacity="0.85"/>
<path d="M673.45 159.91 Q680.52 157.95 685.65 159.48 Q690.78 157.95 697.85 159.91 L697.05 160.21 Q685.65 162.89 674.25 160.21 Z" fill="#8c8c8c"/>
<path d="M674.82 159.91 A10.83 4.88 0 0 0 696.48 159.91 Q685.65 161.01 674.82 159.91 Z" fill="#242424"/>
<path d="M677.21 161.43 Q685.65 163 694.09 161.43" fill="none" stroke="#f2f2f2" stroke-width="1.3"/>
</g>
<text x="685.65" y="186.12" font-size="5.7" fill="#dedede" text-anchor="middle">Ih</text>
<g filter="url(#b1)">
<rect x="545" y="200" width="28.1" height="27.6" fill="url(#lipH)"/>
<rect x="545" y="200" width="28.1" height="27.6" fill="url(#lipB)"/>
<rect x="545" y="200" width="28.1" height="27.6" fill="url(#lipT)"/>
<line x1="559.05" y1="201" x2="559.05" y2="206.6" stroke="#e4e4e4" stroke-width="1.8" opacity="0.6"/>
<path d="M550.08 209.41 A8.97 10.68 0 0 0 568.02 209.41" fill="none" stroke="#585858" stroke-width="1.5" opacity="0.7"/>
<path d="M548.11 208.81 A10.94 8.98 0 0 0 569.99 208.81 Z" fill="#818181"/>
<ellipse cx="559.05" cy="215.89" rx="5.47" ry="1.15" fill="#d6d6d6" opacity="0.85"/>
<path d="M547.31 208.81 Q554.13 206.85 559.05 208.38 Q563.97 206.85 570.79 208.81 L569.99 209.11 Q559.05 211.79 548.11 209.11 Z" fill="#8c8c8c"/>
<path d="M548.65 208.81 A10.4 4.68 0 0 0 569.45 208.81 Q559.05 209.91 548.65 208.81 Z" fill="#242424"/>
<path d="M550.95 210.33 Q559.05 211.9 567.15 210.33" fill="none" stroke="#f2f2f2" stroke-width="1.3"/>
</g>
<text x="559.05" y="235.02" font-size="5.7" fill="#dedede" text-anchor="middle">K_G</text>
<g filter="url(#b1)">
<rect x="587.2" y="200" width="28.1" height="27.6" fill="url(#lipH)"/>
<rect x="587.2" y="200" width="28.1" height="27.6" fill="url(#lipB)"/>
<rect x="587.2" y="200" width="28.1" height="27.6" fill="url(#lipT)"/>
<line x1="601.25" y1="201" x2="601.25" y2="206.6" stroke="#e4e4e4" stroke-width="1.8" opacity="0.6"/>
<path d="M592.28 209.41 A8.97 10.68 0 0 0 610.22 209.41" fill="none" stroke="#585858" stroke-width="1.5" opacity="0.7"/>
<path d="M590.31 208.81 A10.94 8.98 0 0 0 612.19 208.81 Z" fill="#818181"/>
<ellipse cx="601.25" cy="215.89" rx="5.47" ry="1.15" fill="#d6d6d6" opacity="0.85"/>
<path d="M589.51 208.81 Q596.33 206.85 601.25 208.38 Q606.17 206.85 612.99 208.81 L612.19 209.11 Q601.25 211.79 590.31 209.11 Z" fill="#8c8c8c"/>
<path d="M590.85 208.81 A10.4 4.68 0 0 0 611.65 208.81 Q601.25 209.91 590.85 208.81 Z" fill="#242424"/>
<path d="M593.15 210.33 Q601.25 211.9 609.35 210.33" fill="none" stroke="#f2f2f2" stroke-width="1.3"/>
</g>
<text x="601.25" y="235.02" font-size="5.7" fill="#dedede" text-anchor="middle">N_NG</text>
<g filter="url(#b1)">
<rect x="629.4" y="200" width="28.1" height="27.6" fill="url(#lipH)"/>
<rect x="629.4" y="200" width="28.1" height="27.6" fill="url(#lipB)"/>
<rect x="629.4" y="200" width="28.1" height="27.6" fill="url(#lipT)"/>
<line x1="643.45" y1="201" x2="643.45" y2="206.6" stroke="#e4e4e4" stroke-width="1.8" opacity="0.6"/>
<path d="M636.53 209.95 A6.92 10.4 0 0 0 650.37 209.95" fill="none" stroke="#585858" stroke-width="1.5" opacity="0.7"/>
<path d="M635.01 209.35 A8.44 8.7 0 0 0 651.89 209.35 Z" fill="#818181"/>
<ellipse cx="643.45" cy="216.15" rx="4.22" ry="1.15" fill="#d6d6d6" opacity="0.85"/>
<path d="M634.21 209.35 Q639.65 207.15 643.45 208.5 Q647.25 207.15 652.69 209.35 L651.89 209.65 Q643.45 211.25 635.01 209.65 Z" fill="#8c8c8c"/>
<path d="M635.44 209.35 A8.01 4.4 0 0 0 651.46 209.35 Q643.45 209.85 635.44 209.35 Z" fill="#242424"/>
<path d="M637.21 210.53 Q643.45 211.3 649.69 210.53" fill="none" stroke="#f2f2f2" stroke-width="1.3"/>
</g>
<text x="643.45" y="235.02" font-size="5.7" fill="#dedede" text-anchor="middle">Oh</text>
<g filter="url(#b1)">
<rect x="671.6" y="200" width="28.1" height="27.6" fill="url(#lipH)"/>
<rect x="671.6" y="200" width="28.1" height="27.6" fill="url(#lipB)"/>
<rect x="671.6" y="200" width="28.1" height="27.6" fill="url(#lipT)"/>
<line x1="685.65" y1="201" x2="685.65" y2="206.6" stroke="#e4e4e4" stroke-width="1.8" opacity="0.6"/>
<path d="M679.11 209.77 A6.54 9.36 0 0 0 692.19 209.77" fill="none" stroke="#585858" stroke-width="1.5" opacity="0.7"/>
<path d="M677.67 209.17 A7.98 7.66 0 0 0 693.63 209.17 Z" fill="#818181"/>
<ellipse cx="685.65" cy="214.93" rx="3.99" ry="1.15" fill="#d6d6d6" opacity="0.85"/>
<path d="M676.87 209.17 Q682.06 207.05 685.65 208.46 Q689.24 207.05 694.43 209.17 L693.63 209.47 Q685.65 211.43 677.67 209.47 Z" fill="#8c8c8c"/>
<path d="M678.07 209.17 A7.58 3.36 0 0 0 693.23 209.17 Q685.65 209.87 678.07 209.17 Z" fill="#242424"/>
<path d="M679.74 210.46 Q685.65 211.5 691.56 210.46" fill="none" stroke="#f2f2f2" stroke-width="1.3"/>
</g>
<text x="685.65" y="235.02" font-size="5.7" fill="#dedede" text-anchor="middle">R</text>
<g filter="url(#b1)">
<rect x="545" y="249" width="28.1" height="27.6" fill="url(#lipH)"/>
<rect x="545" y="249" width="28.1" height="27.6" fill="url(#lipB)"/>
<rect x="545" y="249" width="28.1" height="27.6" fill="url(#lipT)"/>
<line x1="559.05" y1="250" x2="559.05" y2="255.6" stroke="#e4e4e4" stroke-width="1.8" opacity="0.6"/>
<path d="M549.33 258.32 A9.72 10.86 0 0 0 568.77 258.32" fill="none" stroke="#585858" stroke-width="1.5" opacity="0.7"/>
<path d="M547.19 257.72 A11.86 9.16 0 0 0 570.91 257.72 Z" fill="#818181"/>
<ellipse cx="559.05" cy="264.98" rx="5.93" ry="1.15" fill="#d6d6d6" opacity="0.85"/>
<path d="M546.39 257.72 Q553.71 255.8 559.05 257.36 Q564.39 255.8 571.71 257.72 L570.91 258.02 Q559.05 260.88 547.19 258.02 Z" fill="#8c8c8c"/>
<path d="M547.79 257.72 A11.26 4.86 0 0 0 570.31 257.72 Q559.05 258.92 547.79 257.72 Z" fill="#242424"/>
<path d="M550.28 259.29 Q559.05 261 567.82 259.29" fill="none" stroke="#f2f2f2" stroke-width="1.3"/>
</g>
<text x="559.05" y="284.02" font-size="5.7" fill="#dedede" text-anchor="middle">S_Z</text>
<g filter="url(#b1)">
<rect x="587.2" y="249" width="28.1" height="27.6" fill="url(#lipH)"/>
<rect x="587.2" y="249" width="28.1" height="27.6" fill="url(#lipB)"/>
<rect x="587.2" y="249" width="28.1" height="27.6" fill="url(#lipT)"/>
<line x1="601.25" y1="250" x2="601.25" y2="255.6" stroke="#e4e4e4" stroke-width="1.8" opacity="0.6"/>
<path d="M592.28 258.41 A8.97 10.68 0 0 0 610.22 258.41" fill="none" stroke="#585858" stroke-width="1.5" opacity="0.7"/>
<path d="M590.31 257.81 A10.94 8.98 0 0 0 612.19 257.81 Z" fill="#818181"/>
<ellipse cx="601.25" cy="264.89" rx="5.47" ry="1.15" fill="#d6d6d6" opacity="0.85"/>
<path d="M589.51 257.81 Q596.33 255.85 601.25 257.38 Q606.17 255.85 612.99 257.81 L612.19 258.11 Q601.25 260.79 590.31 258.11 Z" fill="#8c8c8c"/>
<path d="M590.85 257.81 A10.4 4.68 0 0 0 611.65 257.81 Q601.25 258.91 590.85 257.81 Z" fill="#242424"/>
<path d="M593.15 259.33 Q601.25 260.9 609.35 259.33" fill="none" stroke="#f2f2f2" stroke-width="1.3"/>
</g>
<text x="601.25" y="284.02" font-size="5.7" fill="#dedede" text-anchor="middle">T_L_D</text>
<g filter="url(#b1)">
<rect x="629.4" y="249" width="28.1" height="27.6" fill="url(#lipH)"/>
<rect x="629.4" y="249" width="28.1" height="27.6" fill="url(#lipB)"/>
<rect x="629.4" y="249" width="28.1" height="27.6" fill="url(#lipT)"/>
<line x1="643.45" y1="250" x2="643.45" y2="255.6" stroke="#e4e4e4" stroke-width="1.8" opacity="0.6"/>
<path d="M635.6 258.86 A7.85 9.38 0 0 0 651.3 258.86" fill="none" stroke="#585858" stroke-width="1.5" opacity="0.7"/>
<path d="M633.87 258.26 A9.58 7.68 0 0 0 653.03 258.26 Z" fill="#818181"/>
<ellipse cx="643.45" cy="264.04" rx="4.79" ry="1.15" fill="#d6d6d6" opacity="0.85"/>
<path d="M633.07 258.26 Q639.14 256.1 643.45 257.48 Q647.76 256.1 653.83 258.26 L653.03 258.56 Q643.45 260.34 633.87 258.56 Z" fill="#8c8c8c"/>
<path d="M634.35 258.26 A9.1 3.38 0 0 0 652.55 258.26 Q643.45 258.86 634.35 258.26 Z" fill="#242424"/>
<path d="M636.36 259.5 Q643.45 260.4 650.54 259.5" fill="none" stroke="#f2f2f2" stroke-width="1.3"/>
</g>
<text x="643.45" y="284.02" font-size="5.7" fill="#dedede" text-anchor="middle">Th</text>
<g filter="url(#b1)">
<rect x="671.6" y="249" width="28.1" height="27.6" fill="url(#lipH)"/>
<rect x="671.6" y="249" width="28.1" height="27.6" fill="url(#lipB)"/>
<rect x="671.6" y="249" width="28.1" height="27.6" fill="url(#lipT)"/>
<line x1="685.65" y1="250" x2="685.65" y2="255.6" stroke="#e4e4e4" stroke-width="1.8" opacity="0.6"/>
<path d="M680.98 259.13 A4.67 9.64 0 0 0 690.32 259.13" fill="none" stroke="#585858" stroke-width="1.5" opacity="0.7"/>
<path d="M679.95 258.53 A5.7 7.94 0 0 0 691.35 258.53 Z" fill="#818181"/>
<ellipse cx="685.65" cy="264.57" rx="2.85" ry="1.15" fill="#d6d6d6" opacity="0.85"/>
<path d="M679.15 258.53 Q683.08 256.25 685.65 257.54 Q688.22 256.25 692.15 258.53 L691.35 258.83 Q685.65 260.07 679.95 258.83 Z" fill="#8c8c8c"/>
<path d="M680.24 258.53 A5.41 3.64 0 0 0 691.06 258.53 Q685.65 258.83 680.24 258.53 Z" fill="#242424"/>
</g>
<text x="685.65" y="284.02" font-size="5.7" fill="#dedede" text-anchor="middle">W_OO</text>
<path d="M558.6 114 v8.6 l2 -1.9 l1.5 3.3 l1.2 -0.6 l-1.5 -3.2 h2.8 Z" fill="#ffffff" stroke="#222" stroke-width="0.5"/>
<text x="535" y="309.46" font-size="5.8" fill="#d4d4d4" textLength="43" lengthAdjust="spacingAndGlyphs">Expressiveness :</text>
<line x1="535" y1="316.3" x2="669.4" y2="316.3" stroke="#8c8c8c" stroke-width="0.9"/>
<circle cx="672.6" cy="316.3" r="3" fill="#333" stroke="#f2f2f2" stroke-width="1"/>
<rect x="681" y="311.2" width="22.6" height="10" fill="#6c6c6c"/>
<text x="684" y="318.29" font-size="5.6" fill="#f0f0f0">100</text>
<rect x="703.6" y="311.2" width="6.4" height="10" fill="#585858"/>
<path d="M705.5 314.8 l1.3 -1.5 l1.3 1.5 Z" fill="#7a7a7a"/>
<path d="M705.5 317.6 l1.3 1.5 l1.3 -1.5 Z" fill="#e0e0e0"/>
<rect x="85.5" y="395.4" width="853.2" height="11.4" fill="#5e5e5e"/>
<text x="516.5" y="403.18" font-size="6.2" fill="#ececec" text-anchor="middle" font-weight="bold" textLength="23" lengthAdjust="spacingAndGlyphs">Timeline</text>
<rect x="85.5" y="406.8" width="853.2" height="100" fill="#333333"/>
<rect x="88" y="407.4" width="851" height="15.4" fill="#363636"/>
<path d="M94.4 412.4 v5.6 M96.4 412.6 h4 M96.4 415.2 h4 M96.4 417.8 h4" fill="none" stroke="#bcbcbc" stroke-width="0.9"/>
<rect x="110.6" y="412.8" width="5.2" height="4.8" fill="none" stroke="#bcbcbc" stroke-width="0.8"/>
<path d="M109.6 412 h2 M109.6 412 v2" fill="none" stroke="#bcbcbc" stroke-width="0.7"/>
<rect x="112" y="414.2" width="2.4" height="2" fill="#bcbcbc"/>
<path d="M126.6 413.6 h6 v4.4 h-6 Z M126.6 415.4 h6 M125.6 411.8 h2.4" fill="none" stroke="#bcbcbc" stroke-width="0.8"/>
<path d="M137 417.6 h2 l-1 1.2 Z" fill="#bcbcbc"/>
<path d="M149.6 413.4 h5 v3.4 h-2.6" fill="none" stroke="#4a4a4a" stroke-width="0.9"/>
<path d="M165 412.6 h6 M166.6 414.6 v3.4 M168.6 416 h2.8 M170 414.6 v2.8" fill="none" stroke="#bcbcbc" stroke-width="0.8"/>
<path d="M182.2 413.4 h5 v3.4 h-2.6" fill="none" stroke="#4a4a4a" stroke-width="0.9"/>
<rect x="197.4" y="412.8" width="5" height="5" fill="none" stroke="#bcbcbc" stroke-width="0.8"/>
<path d="M199.4 416 l3.4 -3.8" fill="none" stroke="#bcbcbc" stroke-width="0.8"/>
<path d="M208 417.6 h2 l-1 1.2 Z" fill="#bcbcbc"/>
<circle cx="220.6" cy="415" r="1.8" fill="none" stroke="#4a4a4a" stroke-width="0.8"/>
<line x1="230" y1="409.4" x2="230" y2="421.4" stroke="#6a6a6a" stroke-width="0.8"/>
<path d="M236.4 414 h5.6 v2.6 h-1.6 l-1 1.2 v-1.2 h-3 Z" fill="none" stroke="#bcbcbc" stroke-width="0.9"/>
<path d="M242 413 l1.4 1 l-1.4 1" fill="none" stroke="#bcbcbc" stroke-width="0.7"/>
<path d="M254 412.4 v4.6 M254 412.4 h2 M256.4 414 h2 M256.4 416 h2" fill="none" stroke="#bcbcbc" stroke-width="0.8"/>
<circle cx="253" cy="417.2" r="1.1" fill="#bcbcbc"/>
<line x1="263.8" y1="409.4" x2="263.8" y2="421.4" stroke="#6a6a6a" stroke-width="0.8"/>
<rect x="269" y="413" width="6" height="4.2" fill="none" stroke="#4a4a4a" stroke-width="0.8"/>
<rect x="284" y="413" width="6" height="4.2" fill="none" stroke="#4a4a4a" stroke-width="0.8"/>
<line x1="296.5" y1="409.4" x2="296.5" y2="421.4" stroke="#6a6a6a" stroke-width="0.8"/>
<rect x="303" y="412.8" width="5" height="4.6" fill="none" stroke="#4a4a4a" stroke-width="0.8"/>
<rect x="318" y="412.8" width="5" height="4.6" fill="none" stroke="#4a4a4a" stroke-width="0.8"/>
<rect x="333" y="412.8" width="5.4" height="4.6" fill="none" stroke="#4a4a4a" stroke-width="0.8"/>
<path d="M349.6 412.4 h3 v2 M349.6 417.6 h5 v-3.2 h-2.6 M352.6 417.6 l-3 -3" fill="none" stroke="#c0392b" stroke-width="0.9"/>
<line x1="360.6" y1="409.4" x2="360.6" y2="421.4" stroke="#6a6a6a" stroke-width="0.8"/>
<circle cx="369" cy="415" r="2.2" fill="none" stroke="#4a4a4a" stroke-width="0.8"/>
<circle cx="384.4" cy="414.8" r="2.3" fill="none" stroke="#bcbcbc" stroke-width="0.8"/>
<line x1="383.2" y1="414.8" x2="385.6" y2="414.8" stroke="#bcbcbc" stroke-width="0.7"/>
<line x1="386" y1="416.6" x2="387.4" y2="418" stroke="#bcbcbc" stroke-width="0.8"/>
<circle cx="400" cy="415" r="2.2" fill="none" stroke="#4a4a4a" stroke-width="0.8"/>
<rect x="412.4" y="411.8" width="6.6" height="6.4" fill="#bdbdbd"/>
<path d="M415.7 412.8 v4.4 M413.4 415 h4.6" fill="none" stroke="#333333" stroke-width="1.2"/>
<path d="M428.6 417.4 h4.4 v-4.4 Z" fill="#bcbcbc"/>
<path d="M448.4 417.4 h-4.4 v-4.4 Z" fill="#bcbcbc"/>
<line x1="443.4" y1="412.6" x2="443.4" y2="417.6" stroke="#bcbcbc" stroke-width="0.7"/>
<line x1="455.6" y1="409.4" x2="455.6" y2="421.4" stroke="#6a6a6a" stroke-width="0.8"/>
<path d="M462.4 412.6 v4.8 l3.6 -2.4 Z" fill="none" stroke="#bcbcbc" stroke-width="0.8"/>
<rect x="476.8" y="412.8" width="4.4" height="4.4" fill="none" stroke="#bcbcbc" stroke-width="0.8"/>
<line x1="459" y1="422.6" x2="486" y2="422.6" stroke="#1a1a1a" stroke-width="0.8"/>
<text x="490.6" y="416.86" font-size="5.8" fill="#d8d8d8" textLength="40.4" lengthAdjust="spacingAndGlyphs">Current Frame :</text>
<rect x="534.5" y="409" width="21" height="12" fill="none" stroke="#505050" stroke-width="0.8"/>
<text x="552.6" y="416.93" font-size="5.4" fill="#e4e4e4" text-anchor="end">24</text>
<rect x="88" y="422.8" width="84.5" height="68.4" fill="#343434"/>
<line x1="88" y1="431.6" x2="172.5" y2="431.6" stroke="#262626" stroke-width="0.8"/>
<line x1="88" y1="442" x2="172.5" y2="442" stroke="#262626" stroke-width="0.8"/>
<line x1="88" y1="454.2" x2="172.5" y2="454.2" stroke="#262626" stroke-width="0.8"/>
<rect x="88" y="479.8" width="84.5" height="11" fill="#181818"/>
<text x="99" y="436.72" font-size="6" fill="#d0d0d0" textLength="18.4" lengthAdjust="spacingAndGlyphs">Sprite</text>
<path d="M91 446 h3 l-1.5 2 Z" fill="#e0e0e0"/>
<text x="96.6" y="449.12" font-size="6" fill="#d8d8d8" textLength="27.4" lengthAdjust="spacingAndGlyphs">Voice Clip</text>
<text x="96.6" y="468.12" font-size="6" fill="#cfcfcf" textLength="15" lengthAdjust="spacingAndGlyphs">Voice</text>
<text x="99" y="486.98" font-size="6.2" fill="#ffffff" font-weight="bold" textLength="12" lengthAdjust="spacingAndGlyphs">Lips</text>
<circle cx="166.4" cy="435.2" r="2.7" fill="none" stroke="#bdbdbd" stroke-width="0.7"/>
<path d="M165 433.8 l2.8 2.8 m0 -2.8 l-2.8 2.8" fill="none" stroke="#bdbdbd" stroke-width="0.6"/>
<circle cx="166.4" cy="447.6" r="2.7" fill="none" stroke="#bdbdbd" stroke-width="0.7"/>
<path d="M165 446.2 l2.8 2.8 m0 -2.8 l-2.8 2.8" fill="none" stroke="#bdbdbd" stroke-width="0.6"/>
<g clip-path="url(#cpTrack)">
<rect x="172.6" y="422.8" width="767" height="8.8" fill="#2a2a2a"/>
<rect x="172.6" y="422.8" width="767" height="2" fill="url(#rul)"/>
<text x="175.3" y="430.39" font-size="5.6" fill="#d0d0d0" text-anchor="middle">0</text>
<line x1="173" y1="422.8" x2="173" y2="425.4" stroke="#6a6a6a" stroke-width="0.6"/>
<text x="198.69" y="430.39" font-size="5.6" fill="#d0d0d0" text-anchor="middle">5</text>
<line x1="196.39" y1="422.8" x2="196.39" y2="425.4" stroke="#6a6a6a" stroke-width="0.6"/>
<text x="222.08" y="430.39" font-size="5.6" fill="#d0d0d0" text-anchor="middle">10</text>
<line x1="219.78" y1="422.8" x2="219.78" y2="425.4" stroke="#6a6a6a" stroke-width="0.6"/>
<text x="245.46" y="430.39" font-size="5.6" fill="#d0d0d0" text-anchor="middle">15</text>
<line x1="243.16" y1="422.8" x2="243.16" y2="425.4" stroke="#6a6a6a" stroke-width="0.6"/>
<text x="268.85" y="430.39" font-size="5.6" fill="#d0d0d0" text-anchor="middle">20</text>
<line x1="266.55" y1="422.8" x2="266.55" y2="425.4" stroke="#6a6a6a" stroke-width="0.6"/>
<text x="292.24" y="430.39" font-size="5.6" fill="#d0d0d0" text-anchor="middle">25</text>
<line x1="289.94" y1="422.8" x2="289.94" y2="425.4" stroke="#6a6a6a" stroke-width="0.6"/>
<text x="315.62" y="430.39" font-size="5.6" fill="#d0d0d0" text-anchor="middle">30</text>
<line x1="313.32" y1="422.8" x2="313.32" y2="425.4" stroke="#6a6a6a" stroke-width="0.6"/>
<text x="339.01" y="430.39" font-size="5.6" fill="#d0d0d0" text-anchor="middle">35</text>
<line x1="336.71" y1="422.8" x2="336.71" y2="425.4" stroke="#6a6a6a" stroke-width="0.6"/>
<text x="362.4" y="430.39" font-size="5.6" fill="#d0d0d0" text-anchor="middle">40</text>
<line x1="360.1" y1="422.8" x2="360.1" y2="425.4" stroke="#6a6a6a" stroke-width="0.6"/>
<text x="385.79" y="430.39" font-size="5.6" fill="#d0d0d0" text-anchor="middle">45</text>
<line x1="383.49" y1="422.8" x2="383.49" y2="425.4" stroke="#6a6a6a" stroke-width="0.6"/>
<text x="409.18" y="430.39" font-size="5.6" fill="#d0d0d0" text-anchor="middle">50</text>
<line x1="406.88" y1="422.8" x2="406.88" y2="425.4" stroke="#6a6a6a" stroke-width="0.6"/>
<text x="432.56" y="430.39" font-size="5.6" fill="#d0d0d0" text-anchor="middle">55</text>
<line x1="430.26" y1="422.8" x2="430.26" y2="425.4" stroke="#6a6a6a" stroke-width="0.6"/>
<text x="455.95" y="430.39" font-size="5.6" fill="#d0d0d0" text-anchor="middle">60</text>
<line x1="453.65" y1="422.8" x2="453.65" y2="425.4" stroke="#6a6a6a" stroke-width="0.6"/>
<text x="479.34" y="430.39" font-size="5.6" fill="#d0d0d0" text-anchor="middle">65</text>
<line x1="477.04" y1="422.8" x2="477.04" y2="425.4" stroke="#6a6a6a" stroke-width="0.6"/>
<text x="502.73" y="430.39" font-size="5.6" fill="#d0d0d0" text-anchor="middle">70</text>
<line x1="500.43" y1="422.8" x2="500.43" y2="425.4" stroke="#6a6a6a" stroke-width="0.6"/>
<text x="526.11" y="430.39" font-size="5.6" fill="#d0d0d0" text-anchor="middle">75</text>
<line x1="523.81" y1="422.8" x2="523.81" y2="425.4" stroke="#6a6a6a" stroke-width="0.6"/>
<text x="549.5" y="430.39" font-size="5.6" fill="#d0d0d0" text-anchor="middle">80</text>
<line x1="547.2" y1="422.8" x2="547.2" y2="425.4" stroke="#6a6a6a" stroke-width="0.6"/>
<text x="572.89" y="430.39" font-size="5.6" fill="#d0d0d0" text-anchor="middle">85</text>
<line x1="570.59" y1="422.8" x2="570.59" y2="425.4" stroke="#6a6a6a" stroke-width="0.6"/>
<text x="596.28" y="430.39" font-size="5.6" fill="#d0d0d0" text-anchor="middle">90</text>
<line x1="593.98" y1="422.8" x2="593.98" y2="425.4" stroke="#6a6a6a" stroke-width="0.6"/>
<text x="619.66" y="430.39" font-size="5.6" fill="#d0d0d0" text-anchor="middle">95</text>
<line x1="617.36" y1="422.8" x2="617.36" y2="425.4" stroke="#6a6a6a" stroke-width="0.6"/>
<text x="643.05" y="430.39" font-size="5.6" fill="#d0d0d0" text-anchor="middle">100</text>
<line x1="640.75" y1="422.8" x2="640.75" y2="425.4" stroke="#6a6a6a" stroke-width="0.6"/>
<text x="666.44" y="430.39" font-size="5.6" fill="#d0d0d0" text-anchor="middle">105</text>
<line x1="664.14" y1="422.8" x2="664.14" y2="425.4" stroke="#6a6a6a" stroke-width="0.6"/>
<text x="689.83" y="430.39" font-size="5.6" fill="#d0d0d0" text-anchor="middle">110</text>
<line x1="687.53" y1="422.8" x2="687.53" y2="425.4" stroke="#6a6a6a" stroke-width="0.6"/>
<text x="713.21" y="430.39" font-size="5.6" fill="#d0d0d0" text-anchor="middle">115</text>
<line x1="710.91" y1="422.8" x2="710.91" y2="425.4" stroke="#6a6a6a" stroke-width="0.6"/>
<text x="736.6" y="430.39" font-size="5.6" fill="#d0d0d0" text-anchor="middle">120</text>
<line x1="734.3" y1="422.8" x2="734.3" y2="425.4" stroke="#6a6a6a" stroke-width="0.6"/>
<text x="759.99" y="430.39" font-size="5.6" fill="#d0d0d0" text-anchor="middle">125</text>
<line x1="757.69" y1="422.8" x2="757.69" y2="425.4" stroke="#6a6a6a" stroke-width="0.6"/>
<text x="783.38" y="430.39" font-size="5.6" fill="#d0d0d0" text-anchor="middle">130</text>
<line x1="781.08" y1="422.8" x2="781.08" y2="425.4" stroke="#6a6a6a" stroke-width="0.6"/>
<text x="806.76" y="430.39" font-size="5.6" fill="#d0d0d0" text-anchor="middle">135</text>
<line x1="804.46" y1="422.8" x2="804.46" y2="425.4" stroke="#6a6a6a" stroke-width="0.6"/>
<text x="830.15" y="430.39" font-size="5.6" fill="#d0d0d0" text-anchor="middle">140</text>
<line x1="827.85" y1="422.8" x2="827.85" y2="425.4" stroke="#6a6a6a" stroke-width="0.6"/>
<text x="853.54" y="430.39" font-size="5.6" fill="#d0d0d0" text-anchor="middle">145</text>
<line x1="851.24" y1="422.8" x2="851.24" y2="425.4" stroke="#6a6a6a" stroke-width="0.6"/>
<text x="876.92" y="430.39" font-size="5.6" fill="#d0d0d0" text-anchor="middle">150</text>
<line x1="874.62" y1="422.8" x2="874.62" y2="425.4" stroke="#6a6a6a" stroke-width="0.6"/>
<text x="900.31" y="430.39" font-size="5.6" fill="#d0d0d0" text-anchor="middle">155</text>
<line x1="898.01" y1="422.8" x2="898.01" y2="425.4" stroke="#6a6a6a" stroke-width="0.6"/>
<text x="923.7" y="430.39" font-size="5.6" fill="#d0d0d0" text-anchor="middle">160</text>
<line x1="921.4" y1="422.8" x2="921.4" y2="425.4" stroke="#6a6a6a" stroke-width="0.6"/>
<rect x="172.6" y="431.6" width="767" height="10.2" fill="url(#trk)"/>
<path d="M175.3 433.2 l2 2.1 l-2 2.1 l-2 -2.1 Z" fill="#f4f4f4"/>
<rect x="172.6" y="442" width="767" height="12.4" fill="#363636"/>
<rect x="173.3" y="444" width="87.6" height="7.8" fill="#dcdcdc"/>
<text x="175" y="450.11" font-size="6.6" fill="#2a2a2a" textLength="67.8" lengthAdjust="spacingAndGlyphs">CtsVisemeTalkPoseClip</text>
<rect x="262" y="444" width="3.6" height="7.8" fill="#c8c8c8"/>
<rect x="266.3" y="444" width="674" height="7.8" fill="#9c9c9c"/>
<text x="268.8" y="450.11" font-size="6.6" fill="#f4f4f4" textLength="67.8" lengthAdjust="spacingAndGlyphs">CtsVisemeTalkPoseClip</text>
<rect x="172.6" y="454.6" width="767" height="23.8" fill="url(#trk)"/>
<rect x="172.6" y="478.4" width="94" height="2.4" fill="#555555"/>
<rect x="266.3" y="478.4" width="674" height="2.4" fill="#5b6b7e"/>
<rect x="172.6" y="480.8" width="767" height="9.2" fill="#191919"/>
<rect x="172.6" y="490" width="94" height="1.6" fill="#555555"/>
<rect x="266.3" y="490" width="674" height="1.6" fill="#5b6b7e"/>
<line x1="173.2" y1="454.6" x2="173.2" y2="490" stroke="#a8a8a8" stroke-width="0.8"/>
<line x1="266.3" y1="454.6" x2="266.3" y2="491" stroke="#8ea0b4" stroke-width="0.8"/>
<line x1="266.3" y1="454.6" x2="940" y2="454.6" stroke="#8093ab" stroke-width="0.9"/>
<path d="M266 466.15 L267 466.15 L268 466.15 L269 466.15 L270 466.15 L271 466.15 L272 466.15 L273 466.15 L274 466.15 L275 466.15 L276 466.15 L277 466.15 L278 466.15 L279 466.15 L280 466.15 L281 466.15 L282 466.15 L283 466.15 L284 466.15 L285 466.15 L286 466.15 L287 465.95 L288 465.83 L289 465.58 L290 465.63 L291 465.45 L292 465.5 L293 465.64 L294 465.62 L295 465.86 L296 464.33 L297 464.07 L298 463.6 L299 462.9 L300 462.2 L301 462.91 L302 462.87 L303 462.69 L304 462.8 L305 463.67 L306 465.01 L307 464.56 L308 464.88 L309 464.27 L310 464.46 L311 464.43 L312 464.33 L313 464.1 L314 463.63 L315 464.04 L316 463.68 L317 463.6 L318 463.8 L319 463.67 L320 464.09 L321 464.14 L322 464.09 L323 463.83 L324 464.12 L325 464.32 L326 464.28 L327 464.5 L328 464.74 L329 464.65 L330 466.09 L331 466.08 L332 465.98 L333 465.93 L334 465.81 L335 465.8 L336 465.86 L337 465.71 L338 465.88 L339 465.83 L340 465.79 L341 465.94 L342 465.93 L343 466.05 L344 466.03 L345 466.15 L346 466.15 L347 466.15 L348 466.15 L349 466.14 L350 466.13 L351 466.11 L352 466.1 L353 466.04 L354 466.02 L355 466.07 L356 466.04 L357 466.12 L358 466.04 L359 466.06 L360 466.03 L361 466.06 L362 466.14 L363 466.15 L364 466.14 L365 466.15 L366 466.15 L367 466.15 L368 465.39 L369 465.27 L370 464.81 L371 464.97 L372 464.78 L373 464.59 L374 464.2 L375 464.6 L376 464.31 L377 464.21 L378 463.98 L379 464.03 L380 464.04 L381 464.47 L382 464.47 L383 464.6 L384 464.44 L385 464.56 L386 465.09 L387 465.22 L388 466.15 L389 466.15 L390 466.15 L391 466.11 L392 466.12 L393 466.13 L394 466.07 L395 466.09 L396 466.08 L397 466.07 L398 466.14 L399 466.15 L400 466.15 L401 466.15 L402 466.15 L403 466.15 L404 466.15 L405 466.15 L406 466.15 L407 466.15 L408 466.15 L409 466.15 L410 466.15 L411 466.15 L412 466.15 L413 466.15 L414 466.15 L415 466.15 L416 466.15 L417 466.15 L418 466.15 L419 466.15 L420 466.15 L421 466.15 L422 466.15 L423 466.15 L424 466.15 L425 466.15 L426 466.15 L427 466.15 L428 466.15 L429 466.15 L430 466.15 L431 466.15 L432 466.15 L433 466.15 L434 466.15 L435 466.15 L436 466.15 L437 466.15 L438 466.15 L439 466.15 L440 466.15 L441 466.15 L442 466.15 L443 466.15 L444 466.15 L445 466.15 L446 466.15 L447 466.15 L448 466.15 L449 466.15 L450 466.15 L451 466.15 L452 465.41 L453 465.11 L454 465.13 L455 464.54 L456 464.47 L457 464.37 L458 464.46 L459 464.79 L460 464.98 L461 465.32 L462 464.8 L463 464.62 L464 464.24 L465 463.87 L466 463.81 L467 463.76 L468 464.25 L469 464.66 L470 464.25 L471 463.5 L472 462.56 L473 462.61 L474 461.52 L475 462.26 L476 463.45 L477 465.34 L478 465.07 L479 464.84 L480 464.78 L481 464.2 L482 463.98 L483 464.25 L484 464.24 L485 464.55 L486 464.64 L487 464.66 L488 464.89 L489 464.86 L490 466.15 L491 466.15 L492 466.15 L493 466.15 L494 466.15 L495 466.15 L496 466.15 L497 466.15 L498 466.15 L499 466.15 L500 466.15 L501 466.15 L502 466.15 L503 466.15 L504 466.15 L505 466.15 L506 466.15 L507 466.15 L508 466.15 L509 466.15 L510 466.15 L511 466.15 L512 466.15 L513 466.15 L514 466.15 L515 466.15 L516 466.15 L517 466.15 L518 466.15 L519 466.15 L520 466.15 L521 466.15 L522 466.15 L523 466.15 L524 466.15 L525 466.15 L526 466.15 L527 466.15 L528 466.15 L529 466.15 L530 466.15 L531 466.15 L532 466.15 L533 466.15 L534 466.15 L535 466.15 L536 466.15 L537 466.15 L538 466.15 L539 466.15 L540 466.15 L541 466.15 L542 466.15 L543 466.15 L544 466.15 L545 466.15 L546 466.15 L547 466.15 L548 466.15 L549 466.15 L550 466.15 L551 466.15 L552 466.15 L553 466.15 L554 466.15 L555 466.15 L556 465.54 L557 465.39 L558 464.82 L559 464.82 L560 464.87 L561 464.58 L562 464.84 L563 464.59 L564 464.44 L565 464.66 L566 464.92 L567 465.3 L568 466.15 L569 466.15 L570 466.15 L571 466.15 L572 466.15 L573 466.15 L574 466.15 L575 466.15 L576 466.15 L577 466.15 L578 465.3 L579 465.24 L580 464.84 L581 464.81 L582 464.55 L583 464.67 L584 464.64 L585 464.2 L586 464.02 L587 464.04 L588 464.04 L589 464.02 L590 464.08 L591 464.44 L592 464.31 L593 464.47 L594 464.75 L595 464.84 L596 464.81 L597 464.94 L598 464.88 L599 464.92 L600 465.84 L601 465.58 L602 465.42 L603 465.3 L604 465.39 L605 465.39 L606 465.37 L607 465.4 L608 465.45 L609 465.4 L610 465.44 L611 465.6 L612 465.06 L613 464.86 L614 464.67 L615 464.91 L616 464.49 L617 464.23 L618 464.19 L619 464.11 L620 464.19 L621 464.32 L622 463.83 L623 464.1 L624 463.71 L625 463.55 L626 463.96 L627 463.95 L628 463.55 L629 463.73 L630 464.17 L631 464.25 L632 464.28 L633 463.82 L634 463.98 L635 464.49 L636 464.16 L637 464.19 L638 464.49 L639 464.77 L640 464.79 L641 465.1 L642 466 L643 465.71 L644 465.65 L645 465.58 L646 465.39 L647 465.49 L648 465.34 L649 465.37 L650 465.59 L651 465.65 L652 465.73 L653 465.85 L654 464.72 L655 464.59 L656 464.21 L657 464.16 L658 463.33 L659 463.62 L660 463.42 L661 463.27 L662 463.03 L663 463.56 L664 463.32 L665 463.88 L666 464.13 L667 464.44 L668 464.76 L669 464.15 L670 464.01 L671 463.88 L672 462.9 L673 463.32 L674 462.89 L675 462.59 L676 462.81 L677 463.16 L678 463.17 L679 463.4 L680 463.54 L681 464.38 L682 465.62 L683 465.58 L684 465.46 L685 465.18 L686 465.18 L687 465.07 L688 464.91 L689 464.79 L690 464.96 L691 464.87 L692 464.93 L693 464.96 L694 464.94 L695 465.11 L696 465.17 L697 465.29 L698 465.25 L699 465.45 L700 466.13 L701 466.07 L702 466.11 L703 466.03 L704 465.94 L705 465.92 L706 466 L707 465.98 L708 465.91 L709 465.97 L710 465.93 L711 465.97 L712 465.87 L713 465.87 L714 465.88 L715 466.02 L716 465.97 L717 466.02 L718 466.12 L719 466.08 L720 466.15 L721 466.15 L722 466.15 L723 466.15 L724 466.15 L725 466.15 L726 466.15 L727 466.15 L728 466.15 L729 466.15 L730 466.15 L731 466.15 L732 466.15 L733 466.15 L734 466.15 L735 466.15 L736 466.15 L737 466.15 L738 466.15 L739 466.15 L740 466.15 L741 466.15 L742 466.15 L743 466.15 L744 466.15 L745 466.15 L746 466.15 L747 466.15 L748 466.15 L749 466.15 L750 466.15 L751 466.15 L752 466.15 L753 466.15 L754 466.15 L755 466.15 L756 466.15 L757 466.15 L758 466.15 L759 466.15 L760 466.15 L761 466.15 L762 466.15 L763 466.15 L764 466.15 L765 466.15 L766 466.15 L767 466.15 L768 466.15 L769 466.15 L770 466.15 L771 466.15 L772 466.15 L773 466.15 L774 466.15 L775 466.15 L776 466.15 L777 466.15 L778 466.15 L779 466.15 L780 466.15 L781 466.15 L782 466.15 L783 466.15 L784 466.15 L785 466.15 L786 466.15 L787 466.15 L788 466.15 L789 466.15 L790 466.15 L791 466.15 L792 464.43 L793 464.39 L794 463.44 L795 463.55 L796 463.26 L797 462.71 L798 462.94 L799 463.75 L800 463.84 L801 464.2 L802 465.77 L803 465.62 L804 465.42 L805 465.14 L806 465.32 L807 465.08 L808 465.15 L809 465.4 L810 465.41 L811 465.5 L812 465.92 L813 465.89 L814 465.57 L815 465.51 L816 465.38 L817 465.58 L818 465.52 L819 465.6 L820 465.43 L821 465.65 L822 465.77 L823 465.82 L824 464.03 L825 463.64 L826 463.71 L827 463.49 L828 462.44 L829 462.58 L830 462.29 L831 462.95 L832 463.02 L833 462.45 L834 462.95 L835 463.57 L836 463.12 L837 463.78 L838 465.35 L839 465.28 L840 464.66 L841 464.87 L842 464.38 L843 464.67 L844 464.91 L845 465.09 L846 466.15 L847 466.15 L848 466.15 L849 466.12 L850 466.12 L851 466.12 L852 466.09 L853 466.08 L854 466.05 L855 466.02 L856 466.01 L857 465.94 L858 466.01 L859 465.98 L860 466.03 L861 466.02 L862 466.07 L863 466.06 L864 466.11 L865 466.04 L866 466.09 L867 466.15 L868 466.15 L869 466.14 L870 465.99 L871 465.76 L872 465.73 L873 465.63 L874 465.46 L875 465.53 L876 465.46 L877 465.39 L878 465.32 L879 465.54 L880 465.46 L881 465.58 L882 465.69 L883 465.84 L884 466.15 L885 466.15 L886 466.15 L887 466.15 L888 466.12 L889 466.15 L890 466.14 L891 466.14 L892 466.03 L893 466.02 L894 466.04 L895 466.09 L896 466.1 L897 466.1 L898 466.09 L899 466.14 L900 466.13 L901 466.15 L902 466.13 L903 466.15 L904 466.15 L905 465.88 L906 465.64 L907 465.7 L908 465.61 L909 465.64 L910 465.47 L911 465.39 L912 465.33 L913 465.4 L914 465.28 L915 465.45 L916 465.36 L917 465.44 L918 465.37 L919 465.53 L920 465.58 L921 465.56 L922 465.65 L923 465.64 L924 465.73 L925 465.57 L926 465.44 L927 465.27 L928 465.08 L929 465.15 L930 465.09 L931 464.75 L932 465.09 L933 464.83 L934 464.9 L935 465.21 L936 464.97 L937 465.07 L938 465.3 L939 465.42 L940 466.15 L940 466.85 L939 467.58 L938 467.7 L937 467.93 L936 468.03 L935 467.79 L934 468.1 L933 468.17 L932 467.91 L931 468.25 L930 467.91 L929 467.85 L928 467.92 L927 467.73 L926 467.56 L925 467.43 L924 467.27 L923 467.36 L922 467.35 L921 467.44 L920 467.42 L919 467.47 L918 467.63 L917 467.56 L916 467.64 L915 467.55 L914 467.72 L913 467.6 L912 467.67 L911 467.61 L910 467.53 L909 467.36 L908 467.39 L907 467.3 L906 467.36 L905 467.12 L904 466.85 L903 466.85 L902 466.87 L901 466.85 L900 466.87 L899 466.86 L898 466.91 L897 466.9 L896 466.9 L895 466.91 L894 466.96 L893 466.98 L892 466.97 L891 466.86 L890 466.86 L889 466.85 L888 466.88 L887 466.85 L886 466.85 L885 466.85 L884 466.85 L883 467.16 L882 467.31 L881 467.42 L880 467.54 L879 467.46 L878 467.68 L877 467.61 L876 467.54 L875 467.47 L874 467.54 L873 467.37 L872 467.27 L871 467.24 L870 467.01 L869 466.86 L868 466.85 L867 466.85 L866 466.91 L865 466.96 L864 466.89 L863 466.94 L862 466.93 L861 466.98 L860 466.97 L859 467.02 L858 466.99 L857 467.06 L856 466.99 L855 466.98 L854 466.95 L853 466.92 L852 466.91 L851 466.88 L850 466.88 L849 466.88 L848 466.85 L847 466.85 L846 466.85 L845 467.91 L844 468.09 L843 468.33 L842 468.62 L841 468.13 L840 468.34 L839 467.72 L838 467.65 L837 469.22 L836 469.88 L835 469.43 L834 470.05 L833 470.55 L832 469.98 L831 470.05 L830 470.71 L829 470.42 L828 470.56 L827 469.51 L826 469.29 L825 469.36 L824 468.97 L823 467.18 L822 467.23 L821 467.35 L820 467.57 L819 467.4 L818 467.48 L817 467.42 L816 467.62 L815 467.49 L814 467.43 L813 467.11 L812 467.08 L811 467.5 L810 467.59 L809 467.6 L808 467.85 L807 467.92 L806 467.68 L805 467.86 L804 467.58 L803 467.38 L802 467.23 L801 468.8 L800 469.16 L799 469.25 L798 470.06 L797 470.29 L796 469.74 L795 469.45 L794 469.56 L793 468.61 L792 468.57 L791 466.85 L790 466.85 L789 466.85 L788 466.85 L787 466.85 L786 466.85 L785 466.85 L784 466.85 L783 466.85 L782 466.85 L781 466.85 L780 466.85 L779 466.85 L778 466.85 L777 466.85 L776 466.85 L775 466.85 L774 466.85 L773 466.85 L772 466.85 L771 466.85 L770 466.85 L769 466.85 L768 466.85 L767 466.85 L766 466.85 L765 466.85 L764 466.85 L763 466.85 L762 466.85 L761 466.85 L760 466.85 L759 466.85 L758 466.85 L757 466.85 L756 466.85 L755 466.85 L754 466.85 L753 466.85 L752 466.85 L751 466.85 L750 466.85 L749 466.85 L748 466.85 L747 466.85 L746 466.85 L745 466.85 L744 466.85 L743 466.85 L742 466.85 L741 466.85 L740 466.85 L739 466.85 L738 466.85 L737 466.85 L736 466.85 L735 466.85 L734 466.85 L733 466.85 L732 466.85 L731 466.85 L730 466.85 L729 466.85 L728 466.85 L727 466.85 L726 466.85 L725 466.85 L724 466.85 L723 466.85 L722 466.85 L721 466.85 L720 466.85 L719 466.92 L718 466.88 L717 466.98 L716 467.03 L715 466.98 L714 467.12 L713 467.13 L712 467.13 L711 467.03 L710 467.07 L709 467.03 L708 467.09 L707 467.02 L706 467 L705 467.08 L704 467.06 L703 466.97 L702 466.89 L701 466.93 L700 466.87 L699 467.55 L698 467.75 L697 467.71 L696 467.83 L695 467.89 L694 468.06 L693 468.04 L692 468.07 L691 468.13 L690 468.04 L689 468.21 L688 468.09 L687 467.93 L686 467.82 L685 467.82 L684 467.54 L683 467.42 L682 467.38 L681 468.62 L680 469.46 L679 469.6 L678 469.83 L677 469.84 L676 470.19 L675 470.41 L674 470.11 L673 469.68 L672 470.1 L671 469.12 L670 468.99 L669 468.85 L668 468.24 L667 468.56 L666 468.87 L665 469.12 L664 469.68 L663 469.44 L662 469.97 L661 469.73 L660 469.58 L659 469.38 L658 469.67 L657 468.84 L656 468.79 L655 468.41 L654 468.28 L653 467.15 L652 467.27 L651 467.35 L650 467.41 L649 467.63 L648 467.66 L647 467.51 L646 467.61 L645 467.42 L644 467.35 L643 467.29 L642 467 L641 467.9 L640 468.21 L639 468.23 L638 468.51 L637 468.81 L636 468.84 L635 468.51 L634 469.02 L633 469.18 L632 468.72 L631 468.75 L630 468.83 L629 469.27 L628 469.45 L627 469.05 L626 469.04 L625 469.45 L624 469.29 L623 468.9 L622 469.17 L621 468.68 L620 468.81 L619 468.89 L618 468.81 L617 468.77 L616 468.51 L615 468.09 L614 468.33 L613 468.14 L612 467.94 L611 467.4 L610 467.56 L609 467.6 L608 467.55 L607 467.6 L606 467.63 L605 467.61 L604 467.61 L603 467.7 L602 467.58 L601 467.42 L600 467.16 L599 468.08 L598 468.12 L597 468.06 L596 468.19 L595 468.16 L594 468.25 L593 468.53 L592 468.69 L591 468.56 L590 468.92 L589 468.98 L588 468.96 L587 468.96 L586 468.98 L585 468.8 L584 468.36 L583 468.33 L582 468.45 L581 468.19 L580 468.16 L579 467.76 L578 467.7 L577 466.85 L576 466.85 L575 466.85 L574 466.85 L573 466.85 L572 466.85 L571 466.85 L570 466.85 L569 466.85 L568 466.85 L567 467.7 L566 468.08 L565 468.34 L564 468.56 L563 468.41 L562 468.16 L561 468.42 L560 468.13 L559 468.18 L558 468.18 L557 467.61 L556 467.46 L555 466.85 L554 466.85 L553 466.85 L552 466.85 L551 466.85 L550 466.85 L549 466.85 L548 466.85 L547 466.85 L546 466.85 L545 466.85 L544 466.85 L543 466.85 L542 466.85 L541 466.85 L540 466.85 L539 466.85 L538 466.85 L537 466.85 L536 466.85 L535 466.85 L534 466.85 L533 466.85 L532 466.85 L531 466.85 L530 466.85 L529 466.85 L528 466.85 L527 466.85 L526 466.85 L525 466.85 L524 466.85 L523 466.85 L522 466.85 L521 466.85 L520 466.85 L519 466.85 L518 466.85 L517 466.85 L516 466.85 L515 466.85 L514 466.85 L513 466.85 L512 466.85 L511 466.85 L510 466.85 L509 466.85 L508 466.85 L507 466.85 L506 466.85 L505 466.85 L504 466.85 L503 466.85 L502 466.85 L501 466.85 L500 466.85 L499 466.85 L498 466.85 L497 466.85 L496 466.85 L495 466.85 L494 466.85 L493 466.85 L492 466.85 L491 466.85 L490 466.85 L489 468.14 L488 468.11 L487 468.34 L486 468.36 L485 468.45 L484 468.76 L483 468.75 L482 469.02 L481 468.8 L480 468.22 L479 468.16 L478 467.93 L477 467.66 L476 469.55 L475 470.74 L474 471.48 L473 470.39 L472 470.44 L471 469.5 L470 468.75 L469 468.34 L468 468.75 L467 469.24 L466 469.19 L465 469.13 L464 468.76 L463 468.38 L462 468.2 L461 467.68 L460 468.02 L459 468.21 L458 468.54 L457 468.63 L456 468.53 L455 468.46 L454 467.87 L453 467.89 L452 467.59 L451 466.85 L450 466.85 L449 466.85 L448 466.85 L447 466.85 L446 466.85 L445 466.85 L444 466.85 L443 466.85 L442 466.85 L441 466.85 L440 466.85 L439 466.85 L438 466.85 L437 466.85 L436 466.85 L435 466.85 L434 466.85 L433 466.85 L432 466.85 L431 466.85 L430 466.85 L429 466.85 L428 466.85 L427 466.85 L426 466.85 L425 466.85 L424 466.85 L423 466.85 L422 466.85 L421 466.85 L420 466.85 L419 466.85 L418 466.85 L417 466.85 L416 466.85 L415 466.85 L414 466.85 L413 466.85 L412 466.85 L411 466.85 L410 466.85 L409 466.85 L408 466.85 L407 466.85 L406 466.85 L405 466.85 L404 466.85 L403 466.85 L402 466.85 L401 466.85 L400 466.85 L399 466.85 L398 466.86 L397 466.93 L396 466.92 L395 466.91 L394 466.93 L393 466.87 L392 466.88 L391 466.89 L390 466.85 L389 466.85 L388 466.85 L387 467.78 L386 467.91 L385 468.44 L384 468.56 L383 468.4 L382 468.53 L381 468.53 L380 468.96 L379 468.97 L378 469.02 L377 468.79 L376 468.69 L375 468.4 L374 468.8 L373 468.41 L372 468.22 L371 468.03 L370 468.19 L369 467.73 L368 467.61 L367 466.85 L366 466.85 L365 466.85 L364 466.86 L363 466.85 L362 466.86 L361 466.94 L360 466.97 L359 466.94 L358 466.96 L357 466.88 L356 466.96 L355 466.93 L354 466.98 L353 466.96 L352 466.9 L351 466.89 L350 466.87 L349 466.86 L348 466.85 L347 466.85 L346 466.85 L345 466.85 L344 466.97 L343 466.95 L342 467.07 L341 467.06 L340 467.21 L339 467.17 L338 467.12 L337 467.29 L336 467.14 L335 467.2 L334 467.19 L333 467.07 L332 467.02 L331 466.92 L330 466.91 L329 468.35 L328 468.26 L327 468.5 L326 468.72 L325 468.68 L324 468.88 L323 469.17 L322 468.91 L321 468.86 L320 468.91 L319 469.33 L318 469.2 L317 469.4 L316 469.32 L315 468.96 L314 469.37 L313 468.9 L312 468.67 L311 468.57 L310 468.54 L309 468.73 L308 468.12 L307 468.44 L306 467.99 L305 469.33 L304 470.2 L303 470.31 L302 470.13 L301 470.09 L300 470.8 L299 470.1 L298 469.4 L297 468.93 L296 468.67 L295 467.14 L294 467.38 L293 467.36 L292 467.5 L291 467.55 L290 467.37 L289 467.42 L288 467.17 L287 467.05 L286 466.85 L285 466.85 L284 466.85 L283 466.85 L282 466.85 L281 466.85 L280 466.85 L279 466.85 L278 466.85 L277 466.85 L276 466.85 L275 466.85 L274 466.85 L273 466.85 L272 466.85 L271 466.85 L270 466.85 L269 466.85 L268 466.85 L267 466.85 L266 466.85 Z" fill="#e8e8e8"/>
<line x1="173" y1="466.5" x2="940" y2="466.5" stroke="#e0e0e0" stroke-width="0.8"/>
<rect x="282.2" y="482.4" width="9.6" height="6.2" fill="#bdbdbd" rx="1"/>
<rect x="291.7" y="482.4" width="10.5" height="6.2" fill="#2f8fdc" rx="1"/>
<line x1="283.8" y1="485.5" x2="290.1" y2="485.5" stroke="#20343f" stroke-width="1.6" opacity="0.55" stroke-dasharray="1.6 0.9"/>
<line x1="293.3" y1="485.5" x2="300.6" y2="485.5" stroke="#20343f" stroke-width="1.6" opacity="0.55" stroke-dasharray="1.6 0.9"/>
<rect x="319" y="482.4" width="25" height="6.2" fill="#c9c9c9" rx="1.1"/>
<line x1="320.6" y1="485.5" x2="330.1" y2="485.5" stroke="#2b2b2b" stroke-width="1.8" opacity="0.8" stroke-dasharray="1.5 0.8"/>
<line x1="333.1" y1="485.5" x2="342.6" y2="485.5" stroke="#2b2b2b" stroke-width="1.8" opacity="0.8" stroke-dasharray="1.5 0.8"/>
<line x1="331.5" y1="482.4" x2="331.5" y2="488.6" stroke="#3a3a3a" stroke-width="0.7"/>
<rect x="347" y="482.4" width="29" height="6.2" fill="#c9c9c9" rx="1.1"/>
<line x1="348.6" y1="485.5" x2="355.27" y2="485.5" stroke="#2b2b2b" stroke-width="1.8" opacity="0.8" stroke-dasharray="1.5 0.8"/>
<line x1="358.27" y1="485.5" x2="364.93" y2="485.5" stroke="#2b2b2b" stroke-width="1.8" opacity="0.8" stroke-dasharray="1.5 0.8"/>
<line x1="356.67" y1="482.4" x2="356.67" y2="488.6" stroke="#3a3a3a" stroke-width="0.7"/>
<line x1="367.93" y1="485.5" x2="374.6" y2="485.5" stroke="#2b2b2b" stroke-width="1.8" opacity="0.8" stroke-dasharray="1.5 0.8"/>
<line x1="366.33" y1="482.4" x2="366.33" y2="488.6" stroke="#3a3a3a" stroke-width="0.7"/>
<rect x="384.8" y="482.4" width="23.9" height="6.2" fill="#c9c9c9" rx="1.1"/>
<line x1="386.4" y1="485.5" x2="395.35" y2="485.5" stroke="#2b2b2b" stroke-width="1.8" opacity="0.8" stroke-dasharray="1.5 0.8"/>
<line x1="398.35" y1="485.5" x2="407.3" y2="485.5" stroke="#2b2b2b" stroke-width="1.8" opacity="0.8" stroke-dasharray="1.5 0.8"/>
<line x1="396.75" y1="482.4" x2="396.75" y2="488.6" stroke="#3a3a3a" stroke-width="0.7"/>
<rect x="412" y="482.4" width="16" height="6.2" fill="#c9c9c9" rx="1.1"/>
<line x1="413.6" y1="485.5" x2="418.6" y2="485.5" stroke="#2b2b2b" stroke-width="1.8" opacity="0.8" stroke-dasharray="1.5 0.8"/>
<line x1="421.6" y1="485.5" x2="426.6" y2="485.5" stroke="#2b2b2b" stroke-width="1.8" opacity="0.8" stroke-dasharray="1.5 0.8"/>
<line x1="420" y1="482.4" x2="420" y2="488.6" stroke="#3a3a3a" stroke-width="0.7"/>
<rect x="431" y="482.4" width="24.8" height="6.2" fill="#c9c9c9" rx="1.1"/>
<line x1="432.6" y1="485.5" x2="442" y2="485.5" stroke="#2b2b2b" stroke-width="1.8" opacity="0.8" stroke-dasharray="1.5 0.8"/>
<line x1="445" y1="485.5" x2="454.4" y2="485.5" stroke="#2b2b2b" stroke-width="1.8" opacity="0.8" stroke-dasharray="1.5 0.8"/>
<line x1="443.4" y1="482.4" x2="443.4" y2="488.6" stroke="#3a3a3a" stroke-width="0.7"/>
<rect x="473.7" y="482.4" width="52.3" height="6.2" fill="#c9c9c9" rx="1.1"/>
<line x1="475.3" y1="485.5" x2="482.76" y2="485.5" stroke="#2b2b2b" stroke-width="1.8" opacity="0.8" stroke-dasharray="1.5 0.8"/>
<line x1="485.76" y1="485.5" x2="493.22" y2="485.5" stroke="#2b2b2b" stroke-width="1.8" opacity="0.8" stroke-dasharray="1.5 0.8"/>
<line x1="484.16" y1="482.4" x2="484.16" y2="488.6" stroke="#3a3a3a" stroke-width="0.7"/>
<line x1="496.22" y1="485.5" x2="503.68" y2="485.5" stroke="#2b2b2b" stroke-width="1.8" opacity="0.8" stroke-dasharray="1.5 0.8"/>
<line x1="494.62" y1="482.4" x2="494.62" y2="488.6" stroke="#3a3a3a" stroke-width="0.7"/>
<line x1="506.68" y1="485.5" x2="514.14" y2="485.5" stroke="#2b2b2b" stroke-width="1.8" opacity="0.8" stroke-dasharray="1.5 0.8"/>
<line x1="505.08" y1="482.4" x2="505.08" y2="488.6" stroke="#3a3a3a" stroke-width="0.7"/>
<line x1="517.14" y1="485.5" x2="524.6" y2="485.5" stroke="#2b2b2b" stroke-width="1.8" opacity="0.8" stroke-dasharray="1.5 0.8"/>
<line x1="515.54" y1="482.4" x2="515.54" y2="488.6" stroke="#3a3a3a" stroke-width="0.7"/>
<rect x="543.4" y="482.4" width="20.3" height="6.2" fill="#c9c9c9" rx="1.1"/>
<line x1="545" y1="485.5" x2="552.15" y2="485.5" stroke="#2b2b2b" stroke-width="1.8" opacity="0.8" stroke-dasharray="1.5 0.8"/>
<line x1="555.15" y1="485.5" x2="562.3" y2="485.5" stroke="#2b2b2b" stroke-width="1.8" opacity="0.8" stroke-dasharray="1.5 0.8"/>
<line x1="553.55" y1="482.4" x2="553.55" y2="488.6" stroke="#3a3a3a" stroke-width="0.7"/>
<rect x="576" y="482.4" width="10.6" height="6.2" fill="#c9c9c9" rx="1.1"/>
<line x1="577.6" y1="485.5" x2="585.2" y2="485.5" stroke="#2b2b2b" stroke-width="1.8" opacity="0.8" stroke-dasharray="1.5 0.8"/>
<rect x="595" y="482.4" width="19.8" height="6.2" fill="#c9c9c9" rx="1.1"/>
<line x1="596.6" y1="485.5" x2="603.5" y2="485.5" stroke="#2b2b2b" stroke-width="1.8" opacity="0.8" stroke-dasharray="1.5 0.8"/>
<line x1="606.5" y1="485.5" x2="613.4" y2="485.5" stroke="#2b2b2b" stroke-width="1.8" opacity="0.8" stroke-dasharray="1.5 0.8"/>
<line x1="604.9" y1="482.4" x2="604.9" y2="488.6" stroke="#3a3a3a" stroke-width="0.7"/>
<rect x="623" y="482.4" width="11.4" height="6.2" fill="#c9c9c9" rx="1.1"/>
<line x1="624.6" y1="485.5" x2="633" y2="485.5" stroke="#2b2b2b" stroke-width="1.8" opacity="0.8" stroke-dasharray="1.5 0.8"/>
<rect x="636.7" y="482.4" width="11.3" height="6.2" fill="#c9c9c9" rx="1.1"/>
<line x1="638.3" y1="485.5" x2="646.6" y2="485.5" stroke="#2b2b2b" stroke-width="1.8" opacity="0.8" stroke-dasharray="1.5 0.8"/>
<rect x="651.3" y="482.4" width="11" height="6.2" fill="#c9c9c9" rx="1.1"/>
<line x1="652.9" y1="485.5" x2="660.9" y2="485.5" stroke="#2b2b2b" stroke-width="1.8" opacity="0.8" stroke-dasharray="1.5 0.8"/>
<rect x="669.6" y="482.4" width="11.4" height="6.2" fill="#c9c9c9" rx="1.1"/>
<line x1="671.2" y1="485.5" x2="679.6" y2="485.5" stroke="#2b2b2b" stroke-width="1.8" opacity="0.8" stroke-dasharray="1.5 0.8"/>
<rect x="683.9" y="482.4" width="19.9" height="6.2" fill="#c9c9c9" rx="1.1"/>
<line x1="685.5" y1="485.5" x2="692.45" y2="485.5" stroke="#2b2b2b" stroke-width="1.8" opacity="0.8" stroke-dasharray="1.5 0.8"/>
<line x1="695.45" y1="485.5" x2="702.4" y2="485.5" stroke="#2b2b2b" stroke-width="1.8" opacity="0.8" stroke-dasharray="1.5 0.8"/>
<line x1="693.85" y1="482.4" x2="693.85" y2="488.6" stroke="#3a3a3a" stroke-width="0.7"/>
<rect x="711.6" y="482.4" width="11.2" height="6.2" fill="#c9c9c9" rx="1.1"/>
<line x1="713.2" y1="485.5" x2="721.4" y2="485.5" stroke="#2b2b2b" stroke-width="1.8" opacity="0.8" stroke-dasharray="1.5 0.8"/>
<rect x="725.6" y="482.4" width="11.4" height="6.2" fill="#c9c9c9" rx="1.1"/>
<line x1="727.2" y1="485.5" x2="735.6" y2="485.5" stroke="#2b2b2b" stroke-width="1.8" opacity="0.8" stroke-dasharray="1.5 0.8"/>
<rect x="739.6" y="482.4" width="11" height="6.2" fill="#c9c9c9" rx="1.1"/>
<line x1="741.2" y1="485.5" x2="749.2" y2="485.5" stroke="#2b2b2b" stroke-width="1.8" opacity="0.8" stroke-dasharray="1.5 0.8"/>
<rect x="753.8" y="482.4" width="11.1" height="6.2" fill="#c9c9c9" rx="1.1"/>
<line x1="755.4" y1="485.5" x2="763.5" y2="485.5" stroke="#2b2b2b" stroke-width="1.8" opacity="0.8" stroke-dasharray="1.5 0.8"/>
<rect x="787" y="482.4" width="10" height="6.2" fill="#c9c9c9" rx="1.1"/>
<line x1="788.6" y1="485.5" x2="795.6" y2="485.5" stroke="#2b2b2b" stroke-width="1.8" opacity="0.8" stroke-dasharray="1.5 0.8"/>
<rect x="805" y="482.4" width="11" height="6.2" fill="#c9c9c9" rx="1.1"/>
<line x1="806.6" y1="485.5" x2="814.6" y2="485.5" stroke="#2b2b2b" stroke-width="1.8" opacity="0.8" stroke-dasharray="1.5 0.8"/>
<rect x="819.3" y="482.4" width="10.4" height="6.2" fill="#c9c9c9" rx="1.1"/>
<line x1="820.9" y1="485.5" x2="828.3" y2="485.5" stroke="#2b2b2b" stroke-width="1.8" opacity="0.8" stroke-dasharray="1.5 0.8"/>
<rect x="833" y="482.4" width="11" height="6.2" fill="#c9c9c9" rx="1.1"/>
<line x1="834.6" y1="485.5" x2="842.6" y2="485.5" stroke="#2b2b2b" stroke-width="1.8" opacity="0.8" stroke-dasharray="1.5 0.8"/>
<rect x="847" y="482.4" width="20.7" height="6.2" fill="#c9c9c9" rx="1.1"/>
<line x1="848.6" y1="485.5" x2="855.95" y2="485.5" stroke="#2b2b2b" stroke-width="1.8" opacity="0.8" stroke-dasharray="1.5 0.8"/>
<line x1="858.95" y1="485.5" x2="866.3" y2="485.5" stroke="#2b2b2b" stroke-width="1.8" opacity="0.8" stroke-dasharray="1.5 0.8"/>
<line x1="857.35" y1="482.4" x2="857.35" y2="488.6" stroke="#3a3a3a" stroke-width="0.7"/>
<rect x="875" y="482.4" width="11" height="6.2" fill="#c9c9c9" rx="1.1"/>
<line x1="876.6" y1="485.5" x2="884.6" y2="485.5" stroke="#2b2b2b" stroke-width="1.8" opacity="0.8" stroke-dasharray="1.5 0.8"/>
<rect x="893.7" y="482.4" width="11" height="6.2" fill="#c9c9c9" rx="1.1"/>
<line x1="895.3" y1="485.5" x2="903.3" y2="485.5" stroke="#2b2b2b" stroke-width="1.8" opacity="0.8" stroke-dasharray="1.5 0.8"/>
<rect x="908" y="482.4" width="10.4" height="6.2" fill="#c9c9c9" rx="1.1"/>
<line x1="909.6" y1="485.5" x2="917" y2="485.5" stroke="#2b2b2b" stroke-width="1.8" opacity="0.8" stroke-dasharray="1.5 0.8"/>
<rect x="932" y="482.4" width="10" height="6.2" fill="#c9c9c9" rx="1.1"/>
<line x1="933.6" y1="485.5" x2="940.6" y2="485.5" stroke="#2b2b2b" stroke-width="1.8" opacity="0.8" stroke-dasharray="1.5 0.8"/>
<rect x="285.3" y="424.2" width="4.4" height="6.6" fill="#0a0a0a"/>
<line x1="287.5" y1="423.4" x2="287.5" y2="496" stroke="#a03a2e" stroke-width="0.8"/>
<path d="M172.8 423 h2.6 l-2.6 2.6 Z" fill="#d0392b"/>
</g>
<rect x="85.5" y="491.6" width="853.2" height="5.6" fill="#4c4c4c"/>
<rect x="88" y="491.6" width="84.5" height="5.6" fill="#4a4a4a"/>
<rect x="172.6" y="492.4" width="766" height="1.4" fill="#3a3a3a"/>
<rect x="466" y="493.8" width="473" height="3.4" fill="#404040"/>
<rect x="85.5" y="497.2" width="853.2" height="4.4" fill="#1e1e1e"/>
<rect x="85.5" y="501.4" width="853.2" height="6.2" fill="url(#navy)"/>
<rect x="716" y="503" width="24" height="2" fill="#3a4a7a" opacity="0.7"/>
<circle cx="86.6" cy="504.4" r="1.6" fill="#e06a7a"/>
<line x1="287.5" y1="491.6" x2="287.5" y2="495" stroke="#a8392b" stroke-width="0.9"/>
</g>
<rect x="-8" y="553" width="1040" height="31" fill="url(#tbar)"/>
<line x1="-8" y1="553.3" x2="1032" y2="553.3" stroke="#5a6672" stroke-width="0.7"/>
<path d="M8.6 561.4 l2.8 -0.4 v2.9 h-2.8 Z M11.9 560.9 l3.7 -0.6 v3.6 h-3.7 Z M8.6 564.4 h2.8 v2.9 l-2.8 -0.4 Z M11.9 564.4 h3.7 v3.6 l-3.7 -0.6 Z" fill="#e8eef4"/>
<rect x="25" y="553.6" width="154" height="30" fill="#f3f3f3"/>
<circle cx="35.4" cy="563.6" r="2.7" fill="none" stroke="#333" stroke-width="0.9"/>
<line x1="33.4" y1="565.8" x2="31.4" y2="568" stroke="#333" stroke-width="1"/>
<text x="47.6" y="567.3" font-size="7.2" fill="#4a4a4a" textLength="67" lengthAdjust="spacingAndGlyphs">Type here to search</text>
<g filter="url(#b1)">
<path d="M146 576 Q164 572.6 179 561" fill="none" stroke="#b78a58" stroke-width="3.4"/>
<path d="M158 571 Q163 561 171 556.4" fill="none" stroke="#a87c4c" stroke-width="1.5"/>
<path d="M141 559.6 Q147 556.6 154.4 559.8 Q162 563.4 170 562.8 Q175 562.4 178.6 565" fill="none" stroke="#7cc640" stroke-width="3.6" stroke-linecap="round"/>
<path d="M147 560 L144.6 565.6 M153 562 L151.6 568.4 M163 564 L166 569 M168.6 563.6 L172 567.4" fill="none" stroke="#63ad32" stroke-width="1.5" stroke-linecap="round"/>
<ellipse cx="141.6" cy="559.4" rx="2.9" ry="2" fill="#86cf48"/>
<circle cx="140.8" cy="558.8" r="0.6" fill="#1a1a1a"/>
<circle cx="149" cy="558.8" r="0.6" fill="#d8f0a8"/>
<circle cx="156" cy="560.8" r="0.6" fill="#d8f0a8"/>
<circle cx="163" cy="562.6" r="0.6" fill="#d8f0a8"/>
<circle cx="170" cy="562.4" r="0.6" fill="#d8f0a8"/>
<ellipse cx="171.6" cy="556" rx="2.4" ry="1.2" fill="#6aa83a" transform="rotate(-30 171.6 556)"/>
<ellipse cx="176.2" cy="558.2" rx="2.2" ry="1.1" fill="#8a6a3a" transform="rotate(-50 176.2 558.2)"/>
</g>
<path d="M188.6 559 h4 l1.2 1.4 h6.4 v8.4 h-11.6 Z" fill="#f7c64a"/>
<rect x="188.6" y="562.4" width="11.6" height="6.4" fill="#fbdc7c"/>
<rect x="190.6" y="565.6" width="7.6" height="3.2" fill="#4a9be0"/>
<rect x="214.4" y="558.4" width="11.4" height="11.2" fill="#1b6ec2" stroke="#2a86e0" stroke-width="0.8" rx="1"/>
<text x="220.1" y="566.19" font-size="5.6" fill="#cfe6ff" text-anchor="middle" font-weight="bold">Ps</text>
<circle cx="245.6" cy="564.6" r="5.4" fill="#e8e4da"/>
<path d="M242 562 l8.6 -4.6 l1 1.4 l-8 5.4 Z" fill="#c8742a"/>
<circle cx="243.6" cy="566.4" r="1.2" fill="#d23b3b"/>
<circle cx="246.4" cy="567.6" r="1.2" fill="#3b7ad2"/>
<circle cx="248.6" cy="565.2" r="1.1" fill="#3bb24a"/>
<path d="M241.6 569.6 q4 2 8.4 -0.4" fill="none" stroke="#4a8ad8" stroke-width="1.2"/>
<circle cx="271.6" cy="564.4" r="5.8" fill="#1ed760"/>
<path d="M268.2 562.4 q3.6 -1 7 0.6 M268.6 564.6 q3 -0.8 6 0.5 M269.2 566.6 q2.4 -0.6 4.6 0.4" fill="none" stroke="#10301c" stroke-width="1"/>
<path d="M297.6 557.6 l1.6 0.2 l-0.6 9 l-1.4 -0.2 Z" fill="#e8e8e8"/>
<path d="M293.4 559 q3.4 -1.6 6.4 0.6 q-0.4 4.4 -3.4 5.4 q-3.6 -1.2 -3 -6 Z" fill="#e8501f" opacity="0.9"/>
<circle cx="295.2" cy="568.6" r="1.7" fill="none" stroke="#3a78d8" stroke-width="1.2"/>
<circle cx="300.2" cy="568.4" r="1.7" fill="none" stroke="#3a78d8" stroke-width="1.2"/>
<line x1="296" y1="567" x2="299.6" y2="562" stroke="#3a78d8" stroke-width="0.9"/>
<line x1="299.4" y1="567" x2="296.4" y2="562" stroke="#3a78d8" stroke-width="0.9"/>
<circle cx="324.4" cy="564.6" r="6" fill="#ea4335"/>
<path d="M324.4 564.6 L319.2 561.6 A6 6 0 0 0 321.4 569.8 Z" fill="#34a853"/>
<path d="M324.4 564.6 L321.4 569.8 A6 6 0 0 0 330.4 564.6 Z" fill="#fbbc05"/>
<path d="M324.4 564.6 L330.4 564.6 A6 6 0 0 0 319.2 561.6 Z" fill="#ea4335"/>
<circle cx="324.4" cy="564.6" r="2.8" fill="#ffffff"/>
<circle cx="324.4" cy="564.6" r="2.2" fill="#4285f4"/>
<circle cx="350" cy="564.4" r="5.8" fill="#00aff0"/>
<circle cx="347.6" cy="561.6" r="2.6" fill="#00aff0"/>
<circle cx="352.6" cy="567.2" r="2.6" fill="#00aff0"/>
<text x="350" y="567.16" font-size="8" fill="#ffffff" text-anchor="middle" font-weight="bold">S</text>
<rect x="364" y="553.6" width="25" height="30" fill="#5d6b78"/>
<rect x="364" y="553.6" width="10" height="30" fill="#9a9a62" opacity="0.85"/>
<rect x="371.6" y="559.6" width="9.6" height="8.6" fill="#efefe6" stroke="#444" stroke-width="0.6"/>
<rect x="372.6" y="562" width="2.6" height="5" fill="#c0392b"/>
<rect x="376" y="562" width="2" height="5" fill="#6a8ab0"/>
<rect x="378.6" y="562" width="1.8" height="5" fill="#6a8ab0"/>
<path d="M371.4 559.8 l10 -1.6" fill="none" stroke="#333" stroke-width="1.2"/>
<rect x="183" y="574.2" width="22" height="8" fill="#7fb6e8"/>
<rect x="236" y="574.2" width="21.6" height="8" fill="#7fb6e8"/>
<rect x="313" y="574.2" width="23" height="8" fill="#7fb6e8"/>
<rect x="339" y="574.2" width="22" height="8" fill="#7fb6e8"/>
<rect x="364" y="574.2" width="25" height="8" fill="#f2e24a"/>
<g filter="url(#b1)">
<circle cx="836.6" cy="562.4" r="3" fill="#f5b63a"/>
<path d="M827.6 567.6 a2.6 2.6 0 0 1 1 -5 a3.6 3.6 0 0 1 6.8 -0.4 a2.8 2.8 0 0 1 1.4 5.4 Z" fill="#e8edf3"/>
<path d="M830.6 569.4 l-0.8 1.8 M833.6 569.4 l-0.8 1.8" fill="none" stroke="#5aa0e0" stroke-width="0.9"/>
</g>
<text x="843.8" y="567.11" font-size="6.6" fill="#ffffff" textLength="14" lengthAdjust="spacingAndGlyphs">97°F</text>
<text x="862.6" y="567.11" font-size="6.6" fill="#ffffff" textLength="31.4" lengthAdjust="spacingAndGlyphs">Light rain</text>
<path d="M907 566 l3 -3 l3 3" fill="none" stroke="#fff" stroke-width="0.9"/>
<path d="M919 563.4 h1.6 l2.2 -2 v6.6 l-2.2 -2 h-1.6 Z" fill="none" stroke="#fff" stroke-width="0.7"/>
<path d="M924.4 562.6 q1.4 2 0 4 M925.8 561.6 q2 3 0 6" fill="none" stroke="#fff" stroke-width="0.6"/>
<rect x="932.6" y="561.6" width="7" height="4.8" fill="none" stroke="#fff" stroke-width="0.8"/>
<line x1="934.6" y1="568" x2="938.6" y2="568" stroke="#fff" stroke-width="0.8"/>
<rect x="931.6" y="563.6" width="2.4" height="3.6" fill="#1f2d3b" stroke="#fff" stroke-width="0.6"/>
<text x="945.6" y="566.98" font-size="6.2" fill="#ffffff" textLength="12.4" lengthAdjust="spacingAndGlyphs">ENG</text>
<text x="978.6" y="562.18" font-size="6.2" fill="#ffffff" text-anchor="middle" textLength="22.6" lengthAdjust="spacingAndGlyphs">2:13 PM</text>
<text x="978.6" y="571.78" font-size="6.2" fill="#ffffff" text-anchor="middle" textLength="27.6" lengthAdjust="spacingAndGlyphs">8/14/2023</text>
<path d="M1002 561 h8.6 v6 h-3 l-1.4 1.6 v-1.6 h-4.2 Z" fill="none" stroke="#fff" stroke-width="0.8"/>
<line x1="947" y1="540.8" x2="1015" y2="540.8" stroke="#ececec" stroke-width="0.8"/>
<g opacity="0.6">
<path d="M683 529.5 a12 10.4 0 1 1 6.4 9.2 l-3.8 2 l0.9 -3.6 a10 9 0 0 1 -3.5 -7.6 Z" fill="#535353"/>
<path d="M697.6 533.6 a11.4 9.8 0 1 1 7 9 l-4 1.8 l1 -3.4 a9 8 0 0 1 -4 -7.4 Z" fill="#535353" stroke="#e8e8e8" stroke-width="1.2"/>
<circle cx="691" cy="524.6" r="1.5" fill="#fff"/>
<circle cx="699.6" cy="524.6" r="1.5" fill="#fff"/>
<circle cx="705.2" cy="532.4" r="1.3" fill="#fff"/>
<circle cx="712.2" cy="532.4" r="1.3" fill="#fff"/>
<text x='730.4 758.9 787.4 816 827.4 840 849.8 878.3 906.8 935.3 963.8' y='544.69' font-size='27.6' fill='#535353' style='font-family:"Liberation Sans", "Noto Sans CJK SC", sans-serif'>公众号 <tspan dy="-5.6">·</tspan><tspan dy="5.6"> </tspan>超视界科技</text>
</g>
<g opacity="0.78">
<rect x="10.8" y="544.4" width="5" height="22.2" fill="#80878f" opacity="0.5"/>
<circle cx="27" cy="556.4" r="7.4" fill="none" stroke="#80878f" stroke-width="4.2" opacity="0.5"/>
<circle cx="40.2" cy="548.8" r="4.2" fill="none" stroke="#80878f" stroke-width="3.4" opacity="0.5"/>
<rect x="11.6" y="545" width="3.4" height="21" fill="#ffffff"/>
<path d="M11.6 548.6 l-2.4 1.6 v-2.8 l2.4 -2.4 Z" fill="#ffffff"/>
<circle cx="27" cy="556.4" r="7.4" fill="none" stroke="#ffffff" stroke-width="3"/>
<circle cx="40.2" cy="548.8" r="4.2" fill="none" stroke="#ffffff" stroke-width="2.4"/>
<text x='54 73.7 93.4 113.1' y='565.8' font-size='20' font-weight='bold' fill='#ffffff' stroke="#6f7780" stroke-opacity="0.55" stroke-width="0.9" paint-order="stroke" style='font-family:"Liberation Sans", "Noto Sans CJK SC", sans-serif'>大数跨境</text>
</g>
</g>
</svg>
</body></html>
